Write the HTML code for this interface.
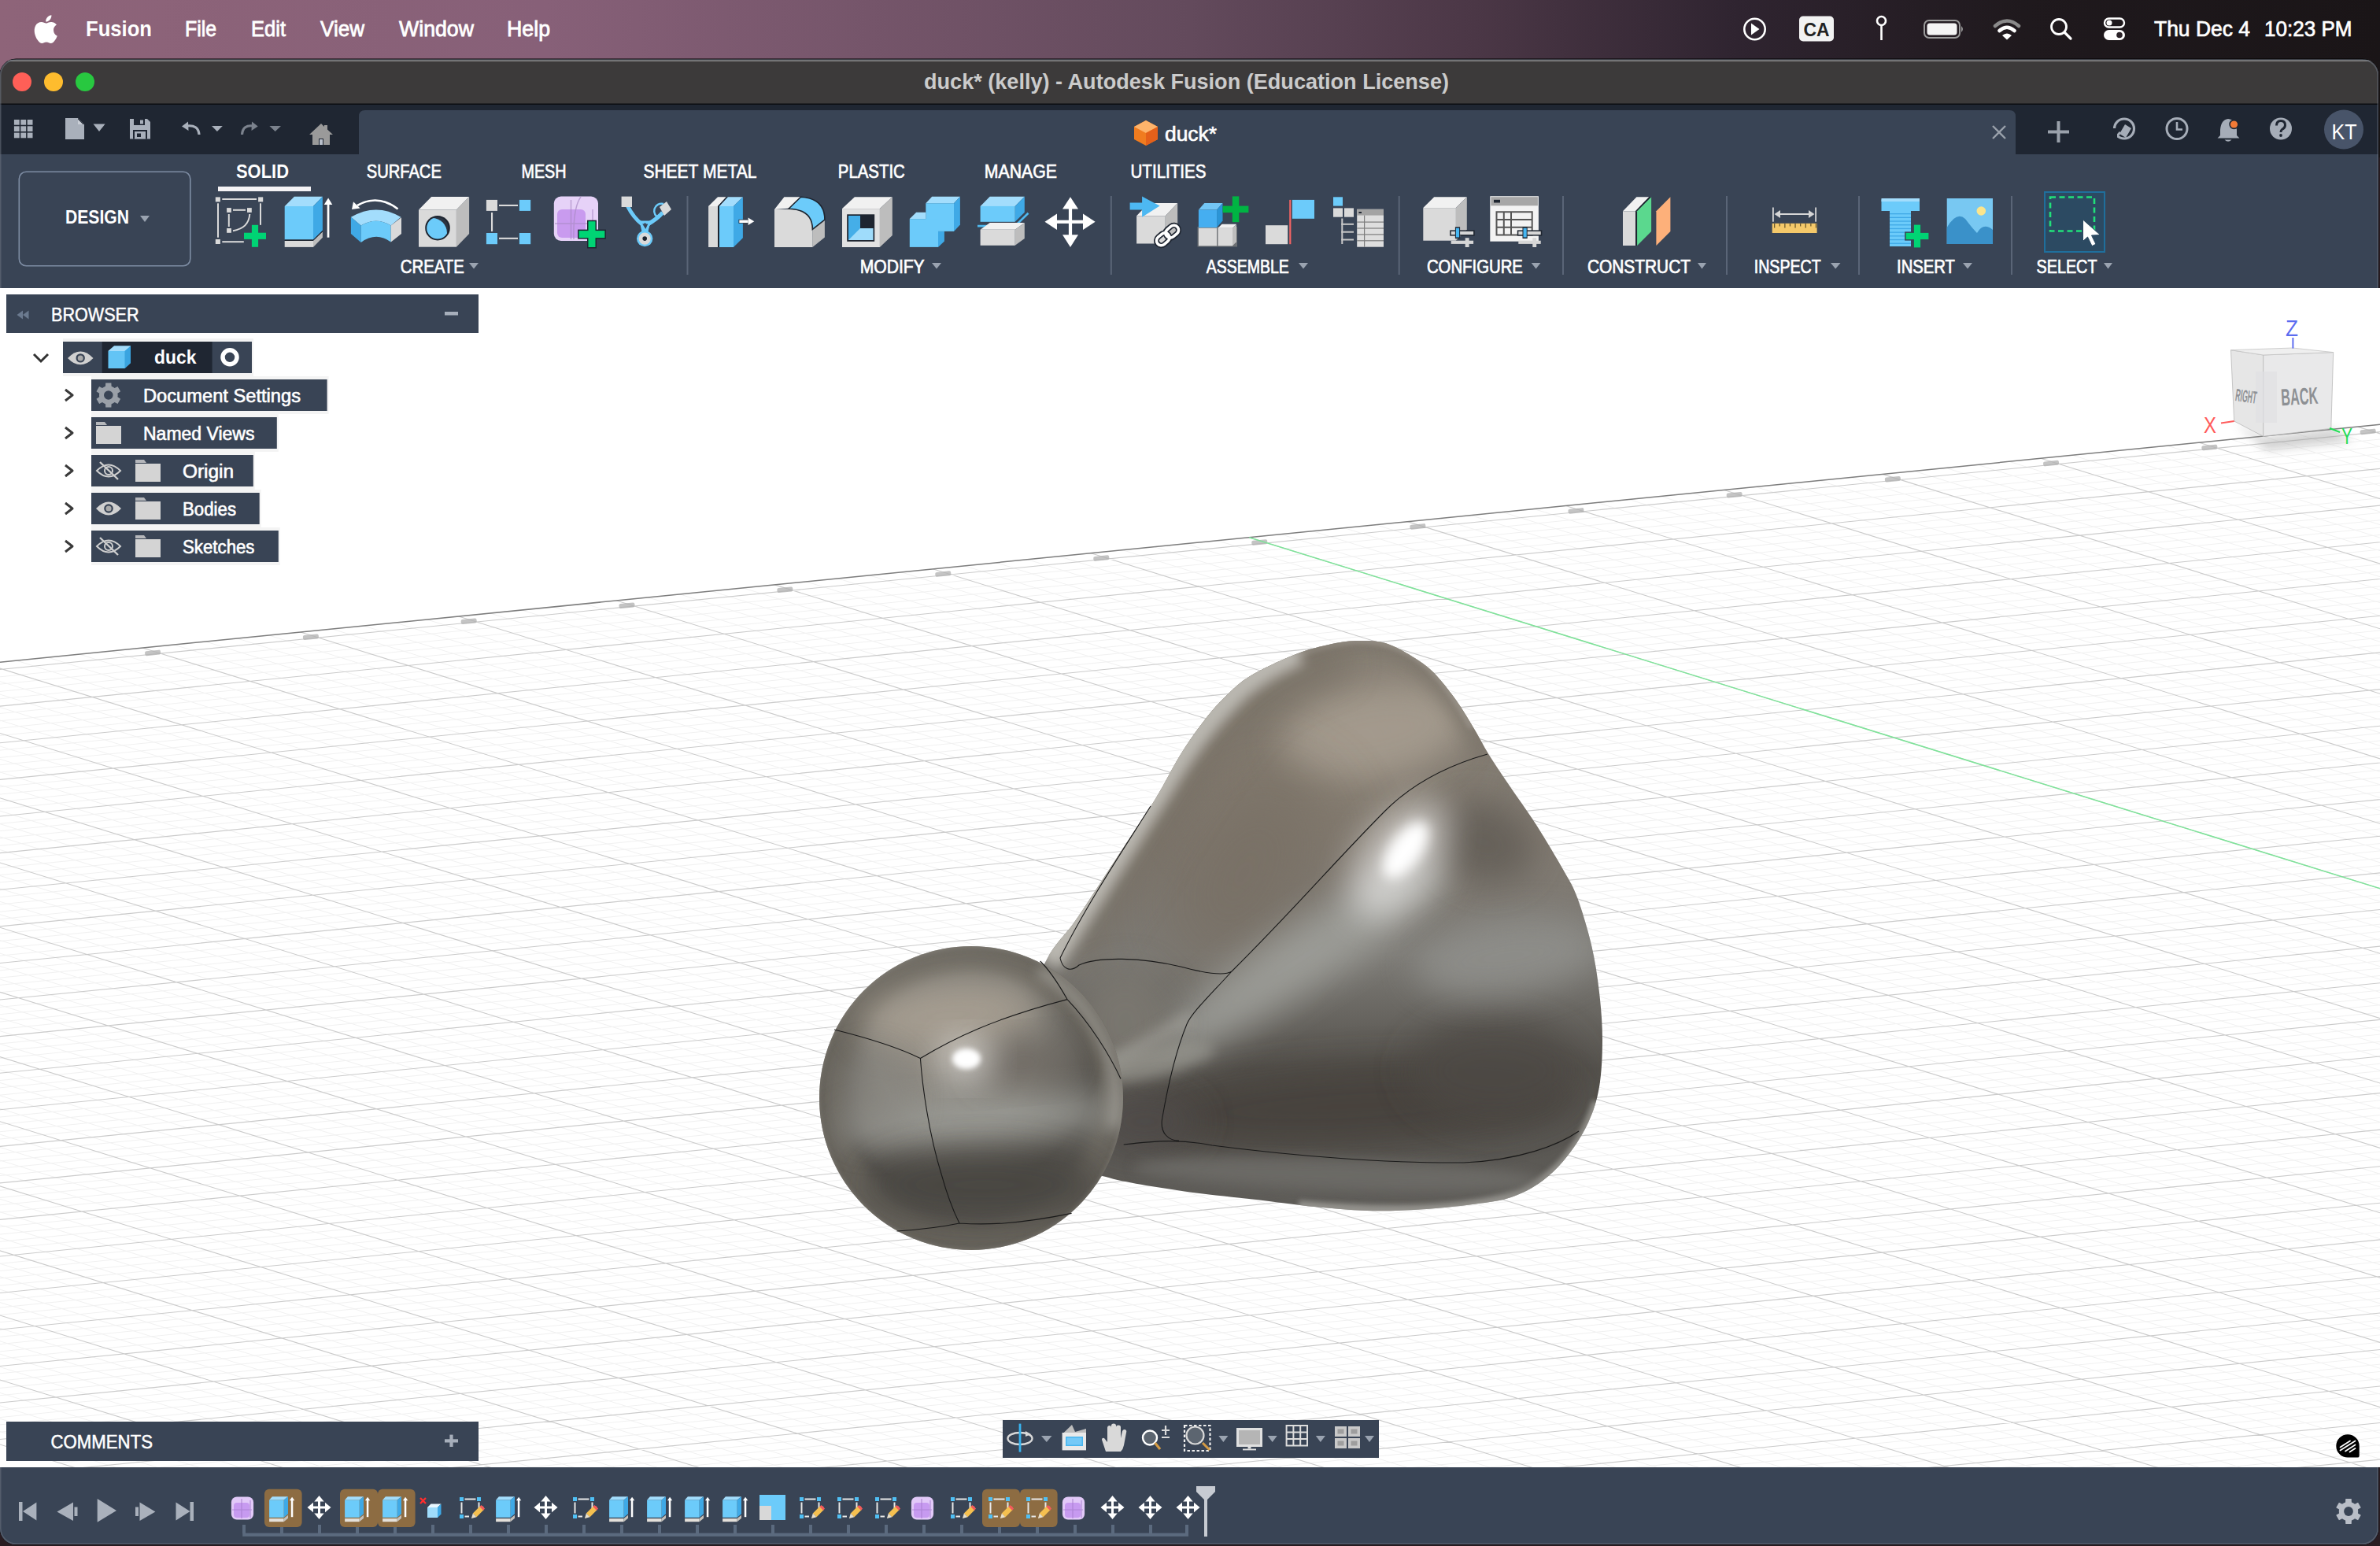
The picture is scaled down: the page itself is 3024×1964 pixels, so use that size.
<!DOCTYPE html><html><head><meta charset="utf-8"><title>duck - Autodesk Fusion</title><style>html,body{margin:0;padding:0;width:3024px;height:1964px;overflow:hidden;background:#2a1d22}svg{display:block}text{font-family:"Liberation Sans",sans-serif}</style></head><body><svg width="3024" height="1964" viewBox="0 0 3024 1964" font-family="Liberation Sans, sans-serif"><defs><clipPath id="vpclip"><rect x="0" y="366" width="3024" height="1498"/></clipPath></defs><rect x="0.0" y="0.0" width="3024.0" height="1964.0" fill="#2a1d22" />
<defs><linearGradient id="mb" x1="0" y1="0" x2="1" y2="0"><stop offset="0" stop-color="#8e6479"/><stop offset="0.23" stop-color="#876078"/><stop offset="0.5" stop-color="#634a5c"/><stop offset="0.62" stop-color="#4b3746"/><stop offset="0.73" stop-color="#2f2430"/><stop offset="0.85" stop-color="#1f191d"/><stop offset="1" stop-color="#1a1517"/></linearGradient><clipPath id="win"><rect x="0" y="75" width="3022" height="1887" rx="20"/></clipPath></defs>
<rect x="0.0" y="0.0" width="3024.0" height="200.0" fill="url(#mb)" />
<rect x="-0.5" y="74.5" width="3023" height="1888" rx="21" fill="#000"/>
<g clip-path="url(#win)">
<rect x="0.0" y="75.0" width="3022.0" height="1887.0" fill="#394455" />
<rect x="0.0" y="75.0" width="3022.0" height="1.0" fill="#000000" />
<rect x="0.0" y="76.0" width="3022.0" height="57.0" fill="#3c3a3a" />
<rect x="0.0" y="76.5" width="3022.0" height="1.5" fill="#8c8c8c" />
<rect x="0.0" y="131.5" width="3022.0" height="1.5" fill="#0b0d10" />
<rect x="0.0" y="133.0" width="3022.0" height="63.0" fill="#1f2632" />
<path d="M456 196V148Q456 140 464 140H2553Q2561 140 2561 148V196Z" fill="#394455"/>
<rect x="0.0" y="196.0" width="3022.0" height="170.0" fill="#394455" />
<rect x="0.0" y="1864.0" width="3022.0" height="98.0" fill="#394455" />
</g>
<rect x="0.75" y="75.75" width="3020.5" height="1885.5" rx="20" fill="none" stroke="#6c7380" stroke-width="1.5" opacity="0.55"/>
<rect x="0.0" y="366.0" width="3024.0" height="1498.0" fill="#ffffff" />
<circle cx="28" cy="104" r="12" fill="#ff5f57"/>
<circle cx="68" cy="104" r="12" fill="#febc2e"/>
<circle cx="108" cy="104" r="12" fill="#28c840"/>
<g transform="translate(41,19) scale(0.0585)" fill="#fff"><path d="M462 330c-1-77 63-114 66-116-36-53-92-60-112-61-48-5-93 28-118 28-24 0-61-27-100-26-52 1-99 30-126 76-54 93-14 232 39 308 26 37 56 79 96 77 39-2 53-25 100-25 47 0 60 25 101 24 42-1 68-38 93-75 30-43 42-84 42-86-1 0-81-31-81-124z"/><path d="M385 103c21-26 36-62 32-98-31 1-69 21-91 47-20 23-37 60-32 95 34 3 69-17 91-44z"/></g>
<text x="109.0" y="46.0" font-size="27" font-weight="bold" fill="#ffffff" text-anchor="start" textLength="84.0" lengthAdjust="spacingAndGlyphs" >Fusion</text>
<text x="235.0" y="46.0" font-size="27" font-weight="normal" fill="#ffffff" text-anchor="start" textLength="40.0" lengthAdjust="spacingAndGlyphs"  stroke="#ffffff" stroke-width="0.8">File</text>
<text x="319.0" y="46.0" font-size="27" font-weight="normal" fill="#ffffff" text-anchor="start" textLength="44.0" lengthAdjust="spacingAndGlyphs"  stroke="#ffffff" stroke-width="0.8">Edit</text>
<text x="407.0" y="46.0" font-size="27" font-weight="normal" fill="#ffffff" text-anchor="start" textLength="56.0" lengthAdjust="spacingAndGlyphs"  stroke="#ffffff" stroke-width="0.8">View</text>
<text x="507.0" y="46.0" font-size="27" font-weight="normal" fill="#ffffff" text-anchor="start" textLength="95.0" lengthAdjust="spacingAndGlyphs"  stroke="#ffffff" stroke-width="0.8">Window</text>
<text x="644.0" y="46.0" font-size="27" font-weight="normal" fill="#ffffff" text-anchor="start" textLength="55.0" lengthAdjust="spacingAndGlyphs"  stroke="#ffffff" stroke-width="0.8">Help</text>
<text x="2737.0" y="46.0" font-size="28" font-weight="normal" fill="#ffffff" text-anchor="start" textLength="122.0" lengthAdjust="spacingAndGlyphs"  stroke="#ffffff" stroke-width="0.7">Thu Dec 4</text>
<text x="2877.0" y="46.0" font-size="28" font-weight="normal" fill="#ffffff" text-anchor="start" textLength="111.5" lengthAdjust="spacingAndGlyphs"  stroke="#ffffff" stroke-width="0.7">10:23 PM</text>
<g fill="none" stroke="#fff" stroke-width="2.6"><circle cx="2229.5" cy="37" r="13.2"/></g>
<path d="M2225 29.5L2235.5 37L2225 44.5Z" fill="#fff"/>
<rect x="2286.0" y="20.5" width="44.0" height="32.0" fill="#f2f2f2" rx="5" />
<text x="2291.5" y="46.0" font-size="23" font-weight="bold" fill="#222" text-anchor="start" textLength="33.0" lengthAdjust="spacingAndGlyphs" >CA</text>
<circle cx="2390.5" cy="26.5" r="5.5" fill="none" stroke="#fff" stroke-width="2.6"/>
<rect x="2389.2" y="31.0" width="2.6" height="20.0" fill="#fff" />
<rect x="2445" y="26" width="45" height="22" rx="6" fill="none" stroke="#9a9a9a" stroke-width="2"/>
<rect x="2448.5" y="29.5" width="38.0" height="15.0" fill="#f4f4f4" rx="3.5" />
<path d="M2492 33Q2496 37 2492 41Z" fill="#9a9a9a"/>
<g fill="none" stroke-linecap="round"><path d="M2535 33Q2550 20 2565 33" stroke="#8a8a8a" stroke-width="4.5"/><path d="M2540.5 39Q2550 30.5 2559.5 39" stroke="#fff" stroke-width="4.5"/></g><path d="M2544 45Q2550 40 2556 45L2550 50.5Z" fill="#fff"/>
<circle cx="2616" cy="34" r="9.5" fill="none" stroke="#fff" stroke-width="2.8"/><path d="M2623 41L2631 49" stroke="#fff" stroke-width="3.2" stroke-linecap="round"/>
<rect x="2674" y="23.5" width="25" height="11" rx="5.5" fill="none" stroke="#fff" stroke-width="2.4"/><circle cx="2680" cy="29" r="3.5" fill="#fff"/><rect x="2673" y="38" width="27" height="13" rx="6.5" fill="#fff"/><circle cx="2693" cy="44.5" r="3.8" fill="#2a2228"/>
<text x="1174.0" y="112.6" font-size="27" font-weight="bold" fill="#cbcbcb" text-anchor="start" textLength="667.0" lengthAdjust="spacingAndGlyphs" >duck* (kelly) - Autodesk Fusion (Education License)</text>
<text x="1480.0" y="178.6" font-size="26" font-weight="normal" fill="#ffffff" text-anchor="start" textLength="66.0" lengthAdjust="spacingAndGlyphs"  stroke="#ffffff" stroke-width="0.6">duck*</text>
<text x="300.0" y="226.0" font-size="24" font-weight="bold" fill="#ffffff" text-anchor="start" textLength="67.0" lengthAdjust="spacingAndGlyphs" >SOLID</text>
<text x="465.8" y="226.0" font-size="24" font-weight="normal" fill="#ffffff" text-anchor="start" textLength="95.0" lengthAdjust="spacingAndGlyphs"  stroke="#ffffff" stroke-width="0.7">SURFACE</text>
<text x="662.5" y="226.0" font-size="24" font-weight="normal" fill="#ffffff" text-anchor="start" textLength="57.0" lengthAdjust="spacingAndGlyphs"  stroke="#ffffff" stroke-width="0.7">MESH</text>
<text x="817.4" y="226.0" font-size="24" font-weight="normal" fill="#ffffff" text-anchor="start" textLength="144.0" lengthAdjust="spacingAndGlyphs"  stroke="#ffffff" stroke-width="0.7">SHEET METAL</text>
<text x="1064.8" y="226.0" font-size="24" font-weight="normal" fill="#ffffff" text-anchor="start" textLength="85.0" lengthAdjust="spacingAndGlyphs"  stroke="#ffffff" stroke-width="0.7">PLASTIC</text>
<text x="1250.8" y="226.0" font-size="24" font-weight="normal" fill="#ffffff" text-anchor="start" textLength="92.0" lengthAdjust="spacingAndGlyphs"  stroke="#ffffff" stroke-width="0.7">MANAGE</text>
<text x="1436.5" y="226.0" font-size="24" font-weight="normal" fill="#ffffff" text-anchor="start" textLength="96.0" lengthAdjust="spacingAndGlyphs"  stroke="#ffffff" stroke-width="0.7">UTILITIES</text>
<rect x="277.0" y="237.0" width="118.0" height="6.0" fill="#f4f2f4" />
<rect x="24.3" y="218.3" width="217.5" height="119.5" rx="9" fill="none" stroke="#7e8da4" stroke-width="1.6"/>
<text x="83.0" y="284.0" font-size="24" font-weight="bold" fill="#ffffff" text-anchor="start" textLength="81.0" lengthAdjust="spacingAndGlyphs" >DESIGN</text>
<path d="M178.0 274.0H190.0L184.0 282.0Z" fill="#9aa3b0"/>
<text x="508.8" y="346.8" font-size="23" font-weight="normal" fill="#ffffff" text-anchor="start" textLength="81.0" lengthAdjust="spacingAndGlyphs"  stroke="#ffffff" stroke-width="0.7">CREATE</text>
<path d="M596.0 334.0H608.0L602.0 341.5Z" fill="#9aa3b0"/>
<text x="1092.7" y="346.8" font-size="23" font-weight="normal" fill="#ffffff" text-anchor="start" textLength="82.0" lengthAdjust="spacingAndGlyphs"  stroke="#ffffff" stroke-width="0.7">MODIFY</text>
<path d="M1184.0 334.0H1196.0L1190.0 341.5Z" fill="#9aa3b0"/>
<text x="1532.8" y="346.8" font-size="23" font-weight="normal" fill="#ffffff" text-anchor="start" textLength="105.0" lengthAdjust="spacingAndGlyphs"  stroke="#ffffff" stroke-width="0.7">ASSEMBLE</text>
<path d="M1650.0 334.0H1662.0L1656.0 341.5Z" fill="#9aa3b0"/>
<text x="1812.9" y="346.8" font-size="23" font-weight="normal" fill="#ffffff" text-anchor="start" textLength="122.0" lengthAdjust="spacingAndGlyphs"  stroke="#ffffff" stroke-width="0.7">CONFIGURE</text>
<path d="M1945.7 334.0H1957.4L1951.6 341.5Z" fill="#9aa3b0"/>
<text x="2017.0" y="346.8" font-size="23" font-weight="normal" fill="#ffffff" text-anchor="start" textLength="131.0" lengthAdjust="spacingAndGlyphs"  stroke="#ffffff" stroke-width="0.7">CONSTRUCT</text>
<path d="M2157.0 334.0H2168.0L2162.5 341.5Z" fill="#9aa3b0"/>
<text x="2228.7" y="346.8" font-size="23" font-weight="normal" fill="#ffffff" text-anchor="start" textLength="85.0" lengthAdjust="spacingAndGlyphs"  stroke="#ffffff" stroke-width="0.7">INSPECT</text>
<path d="M2326.0 334.0H2338.5L2332.2 341.5Z" fill="#9aa3b0"/>
<text x="2410.0" y="346.8" font-size="23" font-weight="normal" fill="#ffffff" text-anchor="start" textLength="74.0" lengthAdjust="spacingAndGlyphs"  stroke="#ffffff" stroke-width="0.7">INSERT</text>
<path d="M2494.0 334.0H2506.0L2500.0 341.5Z" fill="#9aa3b0"/>
<text x="2587.5" y="346.8" font-size="23" font-weight="normal" fill="#ffffff" text-anchor="start" textLength="77.0" lengthAdjust="spacingAndGlyphs"  stroke="#ffffff" stroke-width="0.7">SELECT</text>
<path d="M2673.0 334.0H2684.0L2678.5 341.5Z" fill="#9aa3b0"/>
<rect x="872.5" y="249.0" width="2.0" height="100.0" fill="#5a6577" />
<rect x="1410.8" y="249.0" width="2.0" height="100.0" fill="#5a6577" />
<rect x="1776.7" y="249.0" width="2.0" height="100.0" fill="#5a6577" />
<rect x="1985.0" y="249.0" width="2.0" height="100.0" fill="#5a6577" />
<rect x="2193.0" y="249.0" width="2.0" height="100.0" fill="#5a6577" />
<rect x="2361.0" y="249.0" width="2.0" height="100.0" fill="#5a6577" />
<rect x="2555.0" y="249.0" width="2.0" height="100.0" fill="#5a6577" />
<g transform="translate(268,244)"><rect x="5.8" y="6.4" width="6.1" height="6.0" fill="#dadada" /><rect x="60.1" y="6.4" width="6.1" height="6.0" fill="#dadada" /><rect x="5.8" y="60.0" width="6.1" height="6.0" fill="#dadada" /><rect x="14.3" y="8.0" width="43.7" height="2.0" fill="#dadada" /><rect x="8.0" y="14.3" width="2.0" height="43.4" fill="#dadada" /><rect x="62.0" y="14.3" width="2.0" height="27.5" fill="#dadada" /><rect x="14.3" y="62.2" width="27.5" height="2.0" fill="#dadada" /><rect x="20.1" y="20.1" width="5.8" height="5.8" fill="#dadada" /><rect x="46.0" y="20.1" width="5.8" height="5.8" fill="#dadada" /><rect x="20.1" y="46.0" width="5.8" height="5.8" fill="#dadada" /><rect x="28.0" y="21.8" width="16.0" height="2.0" fill="#dadada" /><rect x="21.8" y="28.0" width="2.0" height="16.0" fill="#dadada" /><path d="M49.3 28Q48 46 28 49.2" fill="none" stroke="#dadada" stroke-width="2"/><rect x="51.9" y="41.8" width="8.2" height="28.0" fill="#00d474" /><rect x="42.0" y="51.7" width="28.0" height="8.2" fill="#00d474" /></g>
<g transform="translate(268,244)"><path d="M93.7 18.0L105.9 5.8L141.9 5.8L130.0 18.0Z" fill="#a3ddfc" /><path d="M130.0 18.0L141.9 5.8L141.9 48.7L130.0 60.4Z" fill="#3fa9e6" /><rect x="93.7" y="18.0" width="36.3" height="42.4" fill="#6ccbfa" /><path d="M93.7 60.4L130.0 60.4L141.9 48.7L141.9 50.6L130.0 62.0L93.7 62.0Z" fill="#1e2530" /><rect x="93.7" y="62.0" width="36.3" height="7.9" fill="#dadada" /><path d="M130.0 62.0L141.9 50.6L141.9 57.7L130.0 69.9Z" fill="#bdbdbd" /><rect x="147.7" y="14.0" width="2.7" height="43.7" fill="#fff" /><path d="M143.8 16.0L149.1 7.4L154.3 16.0Z" fill="#fff" /></g>
<g transform="translate(268,244)"><path d="M237.5 21.5Q212 2 186 17" fill="none" stroke="#fff" stroke-width="2.6"/><path d="M179.0 22.0L181.0 12.2L189.5 20.5Z" fill="#fff" /><path d="M177.9 31.8Q210 13 241.4 31.8L228.7 42.4Q210 31 190.6 42.4Z" fill="#a3ddfc"/><path d="M177.9 31.8L190.6 42.4V64L177.9 53Z" fill="#3fa9e6"/><path d="M190.6 42.4Q210 31 228.7 42.4V63.5Q210 50 190.6 64Z" fill="#6ccbfa"/><path d="M228.7 42.4L242.0 32.3L242.0 53.0L228.7 63.5Z" fill="#dadada" /></g>
<g transform="translate(525,244)"><path d="M7.0 22.5L23.2 5.9L71.1 5.9L54.9 22.5Z" fill="#f1f1f1" /><path d="M54.9 22.5L71.1 5.9L71.1 53.1L54.9 69.7Z" fill="#bdbdbd" /><rect x="7.0" y="22.5" width="47.9" height="47.2" fill="#dadada" /><circle cx="31" cy="45.7" r="15.8" fill="#1e2530"/><clipPath id="holeclip"><circle cx="31" cy="45.7" r="13.8"/></clipPath><g clip-path="url(#holeclip)"><rect x="15" y="30" width="32" height="32" fill="#2b3442"/><circle cx="24" cy="52" r="19" fill="#6ccbfa"/></g></g>
<g transform="translate(525,244)"><rect x="92.9" y="9.9" width="14.1" height="14.0" fill="#dadada" /><rect x="134.9" y="9.9" width="14.3" height="14.0" fill="#6ccbfa" /><rect x="92.9" y="52.0" width="14.1" height="14.2" fill="#6ccbfa" /><rect x="134.9" y="52.0" width="14.3" height="14.2" fill="#6ccbfa" /><rect x="109.0" y="15.9" width="24.0" height="2.1" fill="#dadada" /><rect x="109.0" y="57.8" width="24.0" height="2.1" fill="#dadada" /><rect x="99.0" y="26.0" width="2.1" height="24.0" fill="#dadada" /></g>
<g transform="translate(525,244)"><rect x="178.8" y="5.6" width="56.2" height="56.4" rx="9" fill="#e6d2f8"/><rect x="183" y="22" width="36" height="36" rx="6" fill="#c99bef"/><path d="M200.5 10V60M180 40H233M213 6Q203 20 204 60M228 22V58" stroke="#a98bc4" stroke-width="1.5" fill="none" opacity="0.7"/><rect x="221.0" y="35.7" width="12.0" height="35.8" fill="#1e2530" /><rect x="209.1" y="47.6" width="35.8" height="12.0" fill="#1e2530" /><rect x="222.5" y="37.2" width="9.0" height="32.8" fill="#00d474" /><rect x="210.6" y="49.1" width="32.8" height="9.0" fill="#00d474" /></g>
<g transform="translate(525,244)"><path d="M272 17Q280 33 291 41L293 50H296L298 41Q310 34 317 26" fill="none" stroke="#6ccbfa" stroke-width="5"/><path d="M290.5 40.5H299L294.7 51Z" fill="#394455"/><path d="M288 38H301L295.5 50Z" fill="none" stroke="#6ccbfa" stroke-width="3"/><path d="M318 15A9 9 0 0 0 313 33" fill="none" stroke="#6ccbfa" stroke-width="2.5"/><rect x="264.6" y="5.6" width="13.4" height="13.4" fill="#dadada" /><path d="M313.0 19.0L322.0 12.0L328.0 22.0L319.0 30.0Z" fill="#dadada" /><circle cx="294.2" cy="59.1" r="10.2" fill="#6ccbfa"/><circle cx="294.2" cy="59.1" r="7.6" fill="#dadada"/><circle cx="294.2" cy="59.1" r="2.8" fill="#1e2530"/></g>
<g transform="translate(895,244)"><path d="M5.1 18.0L17.0 6.2L27.8 6.2L17.0 18.0Z" fill="#f1f1f1" /><rect x="5.1" y="18.0" width="11.9" height="52.0" fill="#dadada" /><path d="M17.0 18.0L27.8 6.2L29.9 6.2L19.0 18.0L19.0 70.0L17.0 70.0Z" fill="#1e2530" /><path d="M19.0 18.0L29.9 6.2L48.9 6.2L37.0 18.0Z" fill="#a3ddfc" /><path d="M37.0 18.0L48.9 6.2L48.9 58.2L37.0 70.0Z" fill="#3fa9e6" /><rect x="19.0" y="18.0" width="18.0" height="52.0" fill="#6ccbfa" /><rect x="43.5" y="34.8" width="12.5" height="5.0" fill="#1e2530" /><rect x="44.3" y="35.5" width="11.3" height="3.6" fill="#fff" /><path d="M55.6 32.4L63.3 37.3L55.6 42.0Z" fill="#fff" /><path d="M89.0 22.1L101.4 6.2L122.5 6.2L109.1 20.6Z" fill="#f1f1f1" /><path d="M137.4 47.4L152.9 35.0L152.9 57.6L137.4 70.0Z" fill="#bdbdbd" /><path d="M89 22.1H109.1Q137.4 22 137.4 47.4V70H89Z" fill="#dadada"/><path d="M107 21.3L122.5 6.2Q152.9 8 152.9 35L137.4 47.4Q137.4 22 107 21.3Z" fill="#6ccbfa" stroke="#1e2530" stroke-width="1.6"/><path d="M175.0 21.1L190.9 6.2L238.8 6.2L222.9 21.1Z" fill="#f1f1f1" /><path d="M222.9 21.1L238.8 6.2L238.8 55.1L222.9 70.0Z" fill="#bdbdbd" /><rect x="175.0" y="21.1" width="47.9" height="48.9" fill="#e2e2e2" /><rect x="181.2" y="28.3" width="35.0" height="34.5" fill="#1e2530" /><path d="M183.0 30.0L198.0 30.0L198.0 46.0L214.5 46.0L214.5 61.0L183.0 61.0Z" fill="#9fdcfb" /><path d="M183.0 30.0L198.0 30.0L198.0 46.0L183.0 61.0Z" fill="#45aee8" /></g>
<g transform="translate(1150,244)"><path d="M26.3 14.2L34.2 5.8L69.9 5.8L62.0 14.2Z" fill="#a3ddfc" /><path d="M62.0 14.2L69.9 5.8L69.9 41.5L62.0 49.9Z" fill="#3fa9e6" /><rect x="26.3" y="14.2" width="35.7" height="35.7" fill="#6ccbfa" /><path d="M5.8 34.1L14.2 25.7L26.3 25.7L26.3 34.1Z" fill="#a3ddfc" /><rect x="5.8" y="34.1" width="36.2" height="35.8" fill="#6ccbfa" /><path d="M42.0 49.9L49.9 49.9L49.9 62.5L42.0 69.9Z" fill="#3fa9e6" /><path d="M95.6 17.9L107.7 5.8L151.8 5.8L139.7 17.9Z" fill="#a3ddfc" /><path d="M139.7 17.9L151.8 5.8L151.8 25.7L139.7 37.8Z" fill="#3fa9e6" /><rect x="95.6" y="17.9" width="44.1" height="19.9" fill="#6ccbfa" /><path d="M92 43.1H139.7L156.5 26.8" fill="none" stroke="#4fb9f0" stroke-width="2.6"/><path d="M95.6 47.8L107.7 38.9L151.8 38.9L139.7 47.8Z" fill="#f1f1f1" /><path d="M139.7 47.8L151.8 38.9L151.8 58.9L139.7 67.8Z" fill="#bdbdbd" /><rect x="95.6" y="47.8" width="44.1" height="20.0" fill="#dadada" /><rect x="207.9" y="14.0" width="4.2" height="48.0" fill="#fff" /><rect x="186.0" y="35.7" width="48.0" height="4.2" fill="#fff" /><path d="M210.0 6.3L220.0 21.5L200.0 21.5Z" fill="#fff" /><path d="M210.0 69.9L220.0 54.3L200.0 54.3Z" fill="#fff" /><path d="M177.5 37.8L193.0 27.5L193.0 48.0Z" fill="#fff" /><path d="M241.6 37.8L226.0 27.5L226.0 48.0Z" fill="#fff" /></g>
<g transform="translate(1430,244)"><path d="M14.1 30.3L29.6 14.1L66.2 14.1L50.7 30.3Z" fill="#f1f1f1" /><path d="M50.7 30.3L66.2 14.1L66.2 49.3L50.7 65.5Z" fill="#bdbdbd" /><rect x="14.1" y="30.3" width="36.6" height="35.2" fill="#dadada" /><path d="M5.6 13.4L21.1 13.4L21.1 5.6L43.6 17.6L21.1 31.7L21.1 22.5L5.6 22.5Z" fill="#4db8f2" /><g transform="rotate(-40 53.5 55)" fill="none"><rect x="37" y="49" width="18" height="12" rx="6" stroke="#1e2530" stroke-width="7"/><rect x="52" y="49" width="18" height="12" rx="6" stroke="#1e2530" stroke-width="7"/><rect x="37" y="49" width="18" height="12" rx="6" stroke="#fff" stroke-width="3.6"/><rect x="52" y="49" width="18" height="12" rx="6" stroke="#fff" stroke-width="3.6"/></g><rect x="91.5" y="44.0" width="50.5" height="25.5" fill="#6b6f73" /><rect x="92.9" y="45.7" width="23.2" height="22.6" fill="#dadada" /><path d="M117.5 45.7L122.5 40.7L141.0 40.7L136.0 45.7Z" fill="#f1f1f1" /><path d="M136.0 45.7L141.0 40.7L141.0 63.3L136.0 68.3Z" fill="#bdbdbd" /><rect x="117.5" y="45.7" width="18.5" height="22.6" fill="#dadada" /><path d="M92.9 22.5L100.3 14.1L123.5 14.1L116.1 22.5Z" fill="#73c6f5" /><path d="M116.1 22.5L123.5 14.1L123.5 36.6L116.1 45.0Z" fill="#2b95d6" /><rect x="92.9" y="22.5" width="23.2" height="22.5" fill="#45aef0" /><rect x="135.8" y="5.4" width="8.5" height="32.8" fill="#00b443" /><rect x="123.6" y="17.6" width="32.8" height="8.5" fill="#00b443" /><rect x="178.0" y="42.2" width="28.2" height="24.0" fill="#dadada" /><rect x="208.2" y="9.9" width="2.2" height="56.3" fill="#f26464" /><rect x="211.9" y="9.9" width="28.1" height="23.9" fill="#6ccbfa" /><rect x="264.0" y="6.3" width="12.0" height="11.3" fill="#6ccbfa" /><rect x="264.0" y="20.4" width="12.0" height="11.3" fill="#dadada" /><rect x="278.0" y="20.4" width="12.0" height="11.3" fill="#dadada" /><rect x="274.3" y="33.5" width="2.0" height="32.5" fill="#c8c8c8" /><rect x="274.3" y="39.8" width="15.7" height="2.0" fill="#c8c8c8" /><rect x="274.3" y="49.7" width="15.7" height="2.0" fill="#c8c8c8" /><rect x="274.3" y="59.5" width="15.7" height="2.0" fill="#c8c8c8" /><rect x="294.2" y="21.8" width="33.8" height="47.9" fill="#dedede" /><rect x="294.2" y="21.8" width="33.8" height="7.8" fill="#a3a3a3" /><rect x="296.5" y="25.0" width="3.5" height="2.0" fill="#1e2530" /><rect x="294.2" y="37.5" width="33.8" height="1.2" fill="#7c7c7c" /><rect x="294.2" y="45.4" width="33.8" height="1.2" fill="#7c7c7c" /><rect x="294.2" y="53.3" width="33.8" height="1.2" fill="#7c7c7c" /><rect x="294.2" y="61.2" width="33.8" height="1.2" fill="#7c7c7c" /><rect x="303.0" y="29.6" width="1.2" height="40.1" fill="#7c7c7c" /></g>
<g transform="translate(1800,244)"><path d="M8.3 20.1L22.2 6.2L63.8 6.2L49.9 20.1Z" fill="#f1f1f1" /><path d="M49.9 20.1L63.8 6.2L63.8 47.8L49.9 61.7Z" fill="#bdbdbd" /><rect x="8.3" y="20.1" width="41.6" height="41.6" fill="#dadada" /><rect x="93.3" y="5.2" width="61.6" height="57.5" fill="#f3f3f3" /><rect x="94.3" y="6.2" width="59.6" height="11.1" fill="#a7a7a7" /><rect x="98.0" y="9.8" width="8.0" height="3.7" fill="#1e2530" /><path d="M101.5 25.3H146.7V54.5H101.5ZM101.5 34.9H146.7M101.5 44.8H146.7M110.8 25.3V54.5M120 25.3V54.5" fill="none" stroke="#555" stroke-width="2"/><rect x="42.2" y="48.4" width="31.5" height="7.2" fill="#1e2530" /><rect x="43.7" y="49.9" width="28.4" height="4.2" fill="#d6d6d6" /><rect x="43.7" y="61.7" width="28.4" height="4.2" fill="#d6d6d6" /><rect x="48.9" y="44.3" width="6.2" height="14.7" fill="#1e2530" /><rect x="49.9" y="45.8" width="4.2" height="11.7" fill="#45b6f2" /><rect x="61.7" y="58.2" width="4.9" height="11.8" fill="#d6d6d6" /><rect x="127.8" y="48.4" width="31.5" height="7.2" fill="#1e2530" /><rect x="129.3" y="49.9" width="28.4" height="4.2" fill="#d6d6d6" /><rect x="129.3" y="61.7" width="28.4" height="4.2" fill="#d6d6d6" /><rect x="134.5" y="44.3" width="6.2" height="14.7" fill="#1e2530" /><rect x="135.5" y="45.8" width="4.2" height="11.7" fill="#45b6f2" /><rect x="147.3" y="58.2" width="4.9" height="11.8" fill="#d6d6d6" /></g>
<g transform="translate(1800,244)"><path d="M262.0 24.3L279.4 6.2L295.3 6.2L278.0 24.3Z" fill="#f1f1f1" /><rect x="262.0" y="24.3" width="16.0" height="43.7" fill="#dadada" /><path d="M278.0 24.3L295.3 6.2L298.1 6.2L280.1 24.3L280.1 68.0L278.0 68.0Z" fill="#1e2530" /><path d="M280.1 24.3L298.1 6.2L298.1 50.0L280.1 68.0Z" fill="#5bd88e" /><path d="M304.4 24.3L322.4 6.2L322.4 50.0L304.4 68.0Z" fill="#fdb07a" /></g>
<rect x="2251.7" y="283.8" width="56.9" height="12.2" fill="#f5c96a" /><rect x="2254.0" y="283.8" width="1.3" height="5.7" fill="#6e5a2c" /><rect x="2260.6" y="283.8" width="1.3" height="3.7" fill="#6e5a2c" /><rect x="2267.2" y="283.8" width="1.3" height="5.7" fill="#6e5a2c" /><rect x="2273.8" y="283.8" width="1.3" height="3.7" fill="#6e5a2c" /><rect x="2280.4" y="283.8" width="1.3" height="5.7" fill="#6e5a2c" /><rect x="2287.0" y="283.8" width="1.3" height="3.7" fill="#6e5a2c" /><rect x="2293.6" y="283.8" width="1.3" height="5.7" fill="#6e5a2c" /><rect x="2300.2" y="283.8" width="1.3" height="3.7" fill="#6e5a2c" /><rect x="2306.8" y="283.8" width="1.3" height="5.7" fill="#6e5a2c" /><rect x="2252.0" y="263.5" width="1.8" height="18.2" fill="#d6d6d6" /><rect x="2306.2" y="263.5" width="1.8" height="18.2" fill="#d6d6d6" /><rect x="2258.0" y="271.0" width="44.0" height="2.0" fill="#d6d6d6" /><path d="M2254.5 272.0L2262.0 267.0L2262.0 277.0Z" fill="#d6d6d6" /><path d="M2305.5 272.0L2298.0 267.0L2298.0 277.0Z" fill="#d6d6d6" /><path d="M2390.5 254Q2390.5 252 2393 252H2436Q2439 252 2439 255V268H2390.5Z" fill="#6ccbfa"/><rect x="2390.5" y="252.0" width="48.5" height="4.0" fill="#a3ddfc" /><rect x="2401.0" y="268.0" width="27.0" height="45.0" fill="#6ccbfa" /><rect x="2401.0" y="271.0" width="27.0" height="1.3" fill="#3fa9e6" /><rect x="2401.0" y="275.7" width="27.0" height="1.3" fill="#3fa9e6" /><rect x="2401.0" y="280.4" width="27.0" height="1.3" fill="#3fa9e6" /><rect x="2401.0" y="285.1" width="27.0" height="1.3" fill="#3fa9e6" /><rect x="2401.0" y="289.8" width="27.0" height="1.3" fill="#3fa9e6" /><rect x="2401.0" y="294.5" width="27.0" height="1.3" fill="#3fa9e6" /><rect x="2401.0" y="299.2" width="27.0" height="1.3" fill="#3fa9e6" /><rect x="2401.0" y="303.9" width="27.0" height="1.3" fill="#3fa9e6" /><rect x="2401.0" y="308.6" width="27.0" height="1.3" fill="#3fa9e6" /><rect x="2430.4" y="284.1" width="11.2" height="31.8" fill="#394455" /><rect x="2420.1" y="294.4" width="31.8" height="11.2" fill="#394455" /><rect x="2431.9" y="285.6" width="8.2" height="28.8" fill="#00d474" /><rect x="2421.6" y="295.9" width="28.8" height="8.2" fill="#00d474" /><rect x="2473.7" y="252.0" width="58.3" height="58.0" fill="#78c8f2" /><path d="M2473.7 289Q2486 268 2497 278Q2506 290 2512 296Q2520 282 2532 292V310H2473.7Z" fill="#3a91c9"/><circle cx="2517.3" cy="268" r="5.8" fill="#fbe58c"/><rect x="2598" y="244" width="76" height="76" fill="#2c4a62" stroke="#1f6f9c" stroke-width="2"/><rect x="2605" y="250.5" width="56" height="43" fill="none" stroke="#21e07a" stroke-width="2.6" stroke-dasharray="7 4.5"/><path d="M2646.5 279L2646.5 306.5L2652.5 301L2658 312.6L2663 310.2L2657.5 299L2668.5 298.5Z" fill="#fff" stroke="#2c4a62" stroke-width="1"/>
<rect x="17.9" y="152.0" width="6.8" height="6.7" fill="#a9b0bb" />
<rect x="17.9" y="160.3" width="6.8" height="6.7" fill="#a9b0bb" />
<rect x="17.9" y="168.6" width="6.8" height="6.7" fill="#a9b0bb" />
<rect x="26.3" y="152.0" width="6.8" height="6.7" fill="#a9b0bb" />
<rect x="26.3" y="160.3" width="6.8" height="6.7" fill="#a9b0bb" />
<rect x="26.3" y="168.6" width="6.8" height="6.7" fill="#a9b0bb" />
<rect x="34.7" y="152.0" width="6.8" height="6.7" fill="#a9b0bb" />
<rect x="34.7" y="160.3" width="6.8" height="6.7" fill="#a9b0bb" />
<rect x="34.7" y="168.6" width="6.8" height="6.7" fill="#a9b0bb" />
<path d="M83 150H99L107 158V177H83Z" fill="#a9b0bb"/><path d="M99 150V158H107Z" fill="#1f2632"/>
<path d="M99 151.5L105.5 158H99Z" fill="#c9ced6"/>
<path d="M118.5 157.6H133.6L126.0 167.0Z" fill="#a9b0bb"/>
<path d="M165 151H187L191 155V176.5H165Z" fill="#a9b0bb"/>
<rect x="170.0" y="151.0" width="14.0" height="8.0" fill="#1f2632" />
<rect x="178.0" y="152.5" width="4.0" height="5.0" fill="#a9b0bb" />
<rect x="169.0" y="165.0" width="18.0" height="11.5" fill="#1f2632" />
<rect x="171.0" y="167.0" width="14.0" height="9.5" fill="#a9b0bb" />
<rect x="174.0" y="169.5" width="5.0" height="4.5" fill="#1f2632" />
<path d="M253 171Q252 158 237 160" fill="none" stroke="#a9b0bb" stroke-width="3.2"/>
<path d="M231 160.5L239 154.6L239.5 166Z" fill="#a9b0bb"/>
<path d="M269.0 160.0H282.8L275.9 167.0Z" fill="#a9b0bb"/>
<path d="M307.5 171Q308.5 158 322 160" fill="none" stroke="#7b828d" stroke-width="3.2"/>
<path d="M327.7 160.5L320 154.6L319.5 166Z" fill="#7b828d"/>
<path d="M342.4 160.0H357.0L349.7 167.0Z" fill="#7b828d"/>
<path d="M408 157L393 171H397V184H405V176H411V184H419V171H423L416 164.5V159H412V161Z" fill="#9a9a9a"/>
<rect x="406.0" y="177.0" width="4.0" height="7.0" fill="#b9c0cc" />
<path d="M1441 161L1456 153L1471 161V177L1456 185L1441 177Z" fill="#f07c1f"/><path d="M1441 161L1456 153L1471 161L1456 169Z" fill="#fdb36b"/><path d="M1456 169L1471 161V177L1456 185Z" fill="#e4601a"/>
<path d="M2532 160L2548 176M2548 160L2532 176" stroke="#9aa1ab" stroke-width="2.4"/>
<rect x="2602.0" y="165.5" width="27.0" height="4.0" fill="#9aa1ab" />
<rect x="2613.5" y="154.0" width="4.0" height="27.0" fill="#9aa1ab" />
<circle cx="2699" cy="163.5" r="12.5" fill="none" stroke="#a6adb8" stroke-width="3.2"/>
<path d="M2693 170L2700 158L2708 163L2701 175Z" fill="#a6adb8"/><path d="M2688 175L2694 168" stroke="#a6adb8" stroke-width="3"/>
<rect x="2680.0" y="163.0" width="10.0" height="17.0" fill="#1f2632" />
<circle cx="2766" cy="163.5" r="13" fill="none" stroke="#a6adb8" stroke-width="3"/>
<path d="M2766 155V164.5H2773" fill="none" stroke="#a6adb8" stroke-width="2.6"/>
<path d="M2831 151Q2822 152 2821 165V172L2817.5 175.5H2845.5L2842 172V165Q2841 152 2831 151Z" fill="#a6adb8"/>
<path d="M2826.5 177.5Q2831 182 2835.5 177.5Z" fill="#a6adb8"/>
<circle cx="2838.5" cy="158" r="6.2" fill="#1f2632"/><circle cx="2838.5" cy="158" r="4.6" fill="#f27a36"/>
<circle cx="2898" cy="163.5" r="14" fill="#a6adb8"/>
<path d="M2892.5 159.5Q2892.5 153.5 2898 153.5Q2903.5 153.5 2903.5 159Q2903.5 162.5 2899.5 164.5Q2898 165.5 2898 168" fill="none" stroke="#1f2632" stroke-width="3"/>
<circle cx="2898" cy="172" r="1.9" fill="#1f2632"/>
<circle cx="2978" cy="164.5" r="25" fill="#485469"/>
<text x="2962.5" y="176.5" font-size="28" font-weight="normal" fill="#fff" text-anchor="start" textLength="32.0" lengthAdjust="spacingAndGlyphs" >KT</text>
<g clip-path="url(#vpclip)">
<defs><clipPath id="gclip"><path d="M0 841.13 L3024 539.30 V1864 H0Z"/></clipPath></defs>
<g clip-path="url(#gclip)">
<path d="M-2424.58 1083.14L4002.99 441.58M-2379.11 1097.24L4048.56 455.74M-2356.38 1104.29L4071.34 462.82M-2333.64 1111.34L4094.12 469.89M-2310.91 1118.39L4116.91 476.97M-2265.44 1132.49L4162.47 491.13M-2242.71 1139.54L4185.26 498.21M-2219.98 1146.59L4208.04 505.29M-2197.24 1153.64L4230.82 512.36M-2151.78 1167.74L4276.39 526.52M-2129.05 1174.79L4299.17 533.60M-2106.32 1181.83L4321.95 540.68M-2083.58 1188.88L4344.73 547.75M-2038.12 1202.98L4390.29 561.91M-2015.39 1210.03L4413.07 568.99M-1992.66 1217.08L4435.85 576.06M-1969.93 1224.13L4458.63 583.14M-1924.47 1238.23L4504.19 597.30M-1901.74 1245.28L4526.97 604.37M-1879.01 1252.32L4549.75 611.45M-1856.28 1259.37L4572.53 618.53M-1810.82 1273.47L4618.09 632.68M-1788.09 1280.52L4640.87 639.76M-1765.36 1287.57L4663.64 646.83M-1742.64 1294.62L4686.42 653.91M-1697.18 1308.71L4731.98 668.06M-1674.45 1315.76L4754.75 675.14M-1651.73 1322.81L4777.53 682.22M-1629.00 1329.86L4800.31 689.29M-1583.54 1343.95L4845.86 703.45M-1560.82 1351.00L4868.64 710.52M-1538.09 1358.05L4891.41 717.60M-1515.37 1365.09L4914.19 724.67M-1469.91 1379.19L4959.74 738.83M-1447.19 1386.24L4982.51 745.90M-1424.46 1393.28L5005.29 752.98M-1401.74 1400.33L5028.06 760.05M-1356.29 1414.42L5073.61 774.20M-1333.57 1421.47L5096.39 781.28M-1310.84 1428.52L5119.16 788.35M-1288.12 1435.57L5141.93 795.43M-1242.67 1449.66L5187.48 809.58M-1219.95 1456.71L5210.25 816.66M-1197.23 1463.75L5233.02 823.73M-1174.50 1470.80L5255.80 830.81M-1129.06 1484.89L5301.34 844.96M-1106.34 1491.94L5324.11 852.03M-1083.61 1498.98L5346.88 859.10M-1060.89 1506.03L5369.65 866.18M-1015.45 1520.12L5415.20 880.33M-992.73 1527.17L5437.97 887.40M-970.01 1534.21L5460.74 894.48M-947.29 1541.26L5483.51 901.55M-901.85 1555.35L5529.05 915.70M-879.13 1562.40L5551.82 922.77M-856.41 1569.44L5574.58 929.85M-833.69 1576.49L5597.35 936.92M-788.25 1590.58L5642.89 951.07M-765.53 1597.62L5665.66 958.14M-742.81 1604.67L5688.43 965.22M-720.10 1611.71L5711.19 972.29M-674.66 1625.80L5756.73 986.44M-651.94 1632.85L5779.50 993.51M-629.23 1639.89L5802.26 1000.58M-606.51 1646.94L5825.03 1007.66M-561.08 1661.03L5870.56 1021.80M-538.36 1668.07L5893.33 1028.88M-515.64 1675.12L5916.09 1035.95M-492.93 1682.16L5938.86 1043.02M-447.50 1696.25L5984.39 1057.17M-424.78 1703.29L6007.15 1064.24M-402.07 1710.34L6029.92 1071.31M-379.35 1717.38L6052.68 1078.38M-333.92 1731.47L6098.21 1092.53M-311.21 1738.51L6120.98 1099.60M-288.49 1745.56L6143.74 1106.67M-265.78 1752.60L6166.50 1113.75M-220.35 1766.69L6212.03 1127.89M-197.64 1773.73L6234.79 1134.96M-174.93 1780.78L6257.55 1142.03M-152.22 1787.82L6280.31 1149.10M-106.79 1801.91L6325.84 1163.25M-84.08 1808.95L6348.60 1170.32M-61.37 1815.99L6371.36 1177.39M-38.66 1823.03L6394.12 1184.46M6.77 1837.12L6439.64 1198.61M29.48 1844.16L6462.40 1205.68M52.19 1851.21L6485.16 1212.75M74.90 1858.25L6507.92 1219.82M120.32 1872.33L6553.44 1233.96M143.03 1879.38L6576.20 1241.03M165.74 1886.42L6598.96 1248.10M188.45 1893.46L6621.72 1255.17M233.86 1907.55L6667.24 1269.31M256.57 1914.59L6689.99 1276.38M279.28 1921.63L6712.75 1283.46M301.99 1928.67L6735.51 1290.53M347.40 1942.75L6781.02 1304.67M370.11 1949.80L6803.78 1311.74M392.82 1956.84L6826.54 1318.81M415.53 1963.88L6849.29 1325.88M460.94 1977.96L6894.81 1340.02M483.64 1985.00L6917.56 1347.09M506.35 1992.05L6940.32 1354.16M529.06 1999.09L6963.07 1361.23M574.47 2013.17L7008.58 1375.36M597.17 2020.21L7031.34 1382.43M619.88 2027.25L7054.09 1389.50M642.58 2034.29L7076.85 1396.57M687.99 2048.37L7122.35 1410.71M710.70 2055.41L7145.11 1417.78M733.40 2062.46L7167.86 1424.85M756.10 2069.50L7190.61 1431.92M801.51 2083.58L7236.12 1446.06M824.21 2090.62L7258.87 1453.13M846.91 2097.66L7281.62 1460.19M869.62 2104.70L7304.38 1467.26M915.02 2118.78L7349.88 1481.40M937.72 2125.82L7372.63 1488.47M960.43 2132.86L7395.38 1495.54M983.13 2139.90L7418.13 1502.60M-2384.55 1079.14L1045.90 2142.97M-2344.52 1075.15L1085.98 2139.00M-2304.49 1071.15L1126.06 2135.03M-2264.45 1067.15L1166.14 2131.06M-2184.38 1059.16L1246.31 2123.12M-2144.34 1055.17L1286.40 2119.15M-2104.29 1051.17L1326.49 2115.18M-2064.25 1047.17L1366.58 2111.21M-1984.16 1039.18L1446.77 2103.27M-1944.11 1035.18L1486.86 2099.30M-1904.06 1031.18L1526.96 2095.33M-1864.00 1027.18L1567.06 2091.36M-1783.89 1019.19L1647.26 2083.42M-1743.83 1015.19L1687.37 2079.44M-1703.77 1011.19L1727.48 2075.47M-1663.71 1007.19L1767.58 2071.50M-1583.58 999.19L1847.81 2063.56M-1543.52 995.20L1887.92 2059.58M-1503.45 991.20L1928.04 2055.61M-1463.38 987.20L1968.15 2051.64M-1383.23 979.20L2048.39 2043.69M-1343.15 975.20L2088.52 2039.72M-1303.08 971.20L2128.64 2035.75M-1263.00 967.20L2168.77 2031.77M-1182.83 959.19L2249.03 2023.82M-1142.75 955.19L2289.16 2019.85M-1102.66 951.19L2329.29 2015.87M-1062.57 947.19L2369.43 2011.90M-982.39 939.19L2449.70 2003.95M-942.29 935.19L2489.85 1999.98M-902.20 931.18L2529.99 1996.00M-862.10 927.18L2570.13 1992.02M-781.90 919.18L2650.43 1984.07M-741.80 915.17L2690.58 1980.10M-701.69 911.17L2730.73 1976.12M-661.58 907.17L2770.88 1972.14M-581.37 899.16L2851.19 1964.19M-541.25 895.16L2891.35 1960.21M-501.14 891.15L2931.51 1956.24M-461.02 887.15L2971.68 1952.26M-380.79 879.14L3052.01 1944.30M-340.67 875.14L3092.17 1940.33M-300.54 871.13L3132.34 1936.35M-260.42 867.13L3172.51 1932.37M-180.17 859.11L3252.86 1924.41M-140.04 855.11L3293.04 1920.43M-99.90 851.10L3333.22 1916.46M-59.77 847.10L3373.40 1912.48M20.50 839.09L3453.76 1904.52M60.64 835.08L3493.95 1900.54M100.78 831.07L3534.14 1896.56M140.92 827.07L3574.33 1892.58M221.22 819.05L3654.71 1884.62M261.36 815.04L3694.91 1880.64M301.51 811.04L3735.10 1876.66M341.66 807.03L3775.30 1872.68M421.97 799.01L3855.70 1864.71M462.13 795.01L3895.91 1860.73M502.29 791.00L3936.11 1856.75M542.45 786.99L3976.32 1852.77M622.78 778.97L4056.74 1844.81M662.94 774.96L4096.95 1840.82M703.11 770.95L4137.17 1836.84M743.28 766.94L4177.38 1832.86M823.62 758.92L4257.82 1824.89M863.80 754.91L4298.04 1820.91M903.97 750.90L4338.27 1816.93M944.15 746.89L4378.49 1812.94M1024.51 738.87L4458.95 1804.97M1064.70 734.86L4499.18 1800.99M1104.88 730.85L4539.41 1797.01M1145.07 726.84L4579.64 1793.02M1225.45 718.82L4660.12 1785.05M1265.64 714.80L4700.36 1781.07M1305.84 710.79L4740.60 1777.08M1346.04 706.78L4780.84 1773.10M1426.43 698.75L4861.33 1765.13M1466.64 694.74L4901.58 1761.14M1506.84 690.73L4941.83 1757.15M1547.05 686.72L4982.09 1753.17M1627.46 678.69L5062.60 1745.20M1667.67 674.68L5102.85 1741.21M1707.89 670.66L5143.11 1737.22M1748.10 666.65L5183.37 1733.23M1828.53 658.62L5263.90 1725.26M1868.75 654.61L5304.17 1721.27M1908.98 650.59L5344.44 1717.28M1949.20 646.58L5384.71 1713.30M2029.65 638.55L5465.25 1705.32M2069.88 634.53L5505.53 1701.33M2110.11 630.51L5545.81 1697.34M2150.34 626.50L5586.09 1693.35M2230.81 618.47L5666.65 1685.38M2271.05 614.45L5706.93 1681.39M2311.29 610.43L5747.22 1677.40M2351.53 606.42L5787.51 1673.41M2432.02 598.38L5868.09 1665.43M2472.27 594.37L5908.38 1661.44M2512.52 590.35L5948.68 1657.45M2552.77 586.33L5988.98 1653.46M2633.27 578.30L6069.58 1645.47M2673.53 574.28L6109.88 1641.48M2713.79 570.26L6150.19 1637.49M2754.05 566.24L6190.49 1633.50M2834.57 558.20L6271.11 1625.52M2874.84 554.18L6311.42 1621.52M2915.10 550.17L6351.73 1617.53M2955.37 546.15L6392.05 1613.54M3035.91 538.11L6472.69 1605.55M3076.19 534.09L6513.01 1601.56" stroke="#f1f1f1" stroke-width="1" fill="none"/>
<path d="M-2401.85 1090.19L4025.77 448.66M-2288.18 1125.44L4139.69 484.05M-2174.51 1160.69L4253.60 519.44M-2060.85 1195.93L4367.51 554.83M-1947.20 1231.18L4481.41 590.22M-1833.55 1266.42L4595.31 625.60M-1719.91 1301.66L4709.20 660.99M-1606.27 1336.90L4823.08 696.37M-1492.64 1372.14L4936.96 731.75M-1379.01 1407.38L5050.84 767.13M-1265.39 1442.61L5164.71 802.51M-1151.78 1477.84L5278.57 837.88M-1038.17 1513.08L5392.43 873.25M-924.57 1548.31L5506.28 908.63M-810.97 1583.53L5620.12 943.99M-697.38 1618.76L5733.96 979.36M-583.79 1653.98L5847.80 1014.73M-470.21 1689.21L5961.62 1050.09M-356.64 1724.43L6075.45 1085.46M-243.07 1759.64L6189.27 1120.82M-129.50 1794.86L6303.08 1156.18M-15.94 1830.08L6416.88 1191.53M97.61 1865.29L6530.68 1226.89M211.15 1900.50L6644.48 1262.24M324.70 1935.71L6758.27 1297.60M438.23 1970.92L6872.05 1332.95M551.76 2006.13L6985.83 1368.30M665.29 2041.33L7099.60 1403.64M778.81 2076.54L7213.37 1438.99M892.32 2111.74L7327.13 1474.33M-2424.58 1083.14L1005.83 2146.94M-2224.42 1063.16L1206.23 2127.09M-2024.20 1043.17L1406.67 2107.24M-1823.95 1023.19L1607.16 2087.39M-1623.65 1003.19L1807.69 2067.53M-1423.30 983.20L2008.27 2047.67M-1222.91 963.20L2208.90 2027.80M-1022.48 943.19L2409.57 2007.93M-822.00 923.18L2610.28 1988.05M-621.48 903.16L2811.04 1968.17M-420.91 883.14L3011.84 1948.28M-220.29 863.12L3212.69 1928.39M-19.63 843.09L3413.58 1908.50M181.07 823.06L3614.52 1888.60M381.82 803.02L3815.50 1868.70M582.61 782.98L4016.53 1848.79M783.45 762.93L4217.60 1828.88M984.33 742.88L4418.72 1808.96M1185.26 722.83L4619.88 1789.04M1386.23 702.77L4821.09 1769.11M1587.25 682.70L5022.34 1749.18M1788.32 662.63L5223.64 1729.25M1989.42 642.56L5424.98 1709.31M2190.58 622.48L5626.37 1689.36M2391.78 602.40L5827.80 1669.42M2593.02 582.31L6029.28 1649.46M2794.31 562.22L6230.80 1629.51M2995.64 542.13L6432.37 1609.55" stroke="#cbcbcb" stroke-width="1.1" fill="none"/>
</g>
<path d="M0 841.13L3024 539.30" stroke="#7d7d7d" stroke-width="1.5"/>
<g transform="translate(194.1,829.4) rotate(-5.6)"><rect x="-10" y="-3" width="20" height="6" rx="2" fill="#b0b0b0" opacity="0.75"/></g>
<g transform="translate(394.9,809.3) rotate(-5.6)"><rect x="-10" y="-3" width="20" height="6" rx="2" fill="#b0b0b0" opacity="0.75"/></g>
<g transform="translate(595.7,789.3) rotate(-5.6)"><rect x="-10" y="-3" width="20" height="6" rx="2" fill="#b0b0b0" opacity="0.75"/></g>
<g transform="translate(796.5,769.2) rotate(-5.6)"><rect x="-10" y="-3" width="20" height="6" rx="2" fill="#b0b0b0" opacity="0.75"/></g>
<g transform="translate(997.4,749.2) rotate(-5.6)"><rect x="-10" y="-3" width="20" height="6" rx="2" fill="#b0b0b0" opacity="0.75"/></g>
<g transform="translate(1198.3,729.1) rotate(-5.6)"><rect x="-10" y="-3" width="20" height="6" rx="2" fill="#b0b0b0" opacity="0.75"/></g>
<g transform="translate(1399.3,709.1) rotate(-5.6)"><rect x="-10" y="-3" width="20" height="6" rx="2" fill="#b0b0b0" opacity="0.75"/></g>
<g transform="translate(1600.3,689.0) rotate(-5.6)"><rect x="-10" y="-3" width="20" height="6" rx="2" fill="#b0b0b0" opacity="0.75"/></g>
<g transform="translate(1801.4,668.9) rotate(-5.6)"><rect x="-10" y="-3" width="20" height="6" rx="2" fill="#b0b0b0" opacity="0.75"/></g>
<g transform="translate(2002.5,648.9) rotate(-5.6)"><rect x="-10" y="-3" width="20" height="6" rx="2" fill="#b0b0b0" opacity="0.75"/></g>
<g transform="translate(2203.7,628.8) rotate(-5.6)"><rect x="-10" y="-3" width="20" height="6" rx="2" fill="#b0b0b0" opacity="0.75"/></g>
<g transform="translate(2404.9,608.7) rotate(-5.6)"><rect x="-10" y="-3" width="20" height="6" rx="2" fill="#b0b0b0" opacity="0.75"/></g>
<g transform="translate(2606.1,588.6) rotate(-5.6)"><rect x="-10" y="-3" width="20" height="6" rx="2" fill="#b0b0b0" opacity="0.75"/></g>
<g transform="translate(2807.4,568.5) rotate(-5.6)"><rect x="-10" y="-3" width="20" height="6" rx="2" fill="#b0b0b0" opacity="0.75"/></g>
<g transform="translate(3008.7,548.4) rotate(-5.6)"><rect x="-10" y="-3" width="20" height="6" rx="2" fill="#b0b0b0" opacity="0.75"/></g>
<path d="M1587.3 682.7L5022.3 1749.2" stroke="#7fe39a" stroke-width="1.6"/>
<defs><filter id="b1" x="-50%" y="-50%" width="200%" height="200%"><feGaussianBlur stdDeviation="8"/></filter><filter id="b2" x="-50%" y="-50%" width="200%" height="200%"><feGaussianBlur stdDeviation="22"/></filter><filter id="b3" x="-50%" y="-50%" width="200%" height="200%"><feGaussianBlur stdDeviation="45"/></filter><filter id="b0" x="-50%" y="-50%" width="200%" height="200%"><feGaussianBlur stdDeviation="3"/></filter><clipPath id="bodyclip"><path d="M1300.0 1300.0C1295.0 1258.2 1319.3 1240.2 1330.0 1219.0C1340.7 1197.8 1353.3 1188.2 1364.0 1173.0C1374.7 1157.8 1383.7 1143.7 1394.0 1128.0C1404.3 1112.3 1413.7 1097.8 1426.0 1079.0C1438.3 1060.2 1455.7 1035.1 1468.0 1015.0C1480.3 994.9 1489.4 975.4 1500.0 958.4C1510.6 941.4 1522.0 925.6 1531.7 913.2C1541.4 900.8 1548.6 893.0 1558.0 884.0C1567.4 875.0 1573.8 867.6 1588.3 858.9C1602.8 850.2 1627.6 838.5 1644.9 831.7C1662.2 824.9 1678.8 821.1 1692.4 818.1C1706.0 815.1 1715.0 814.2 1726.3 814.0C1737.6 813.8 1749.0 813.7 1760.3 817.0C1771.6 820.3 1784.1 827.8 1794.3 834.0C1804.5 840.2 1812.0 844.9 1821.4 854.3C1830.8 863.7 1842.1 878.4 1850.8 890.5C1859.5 902.6 1866.7 915.5 1873.5 926.8C1880.3 938.1 1884.1 946.3 1891.6 958.4C1899.1 970.5 1908.5 984.1 1918.7 999.2C1928.9 1014.3 1941.4 1031.3 1952.7 1049.0C1964.0 1066.7 1978.0 1090.4 1986.6 1105.6C1995.1 1120.8 1998.1 1124.2 2004.0 1140.0C2009.9 1155.8 2017.3 1180.4 2022.0 1200.5C2026.7 1220.6 2029.7 1240.6 2032.0 1260.6C2034.3 1280.6 2036.0 1300.7 2036.0 1320.7C2036.0 1340.7 2035.0 1363.2 2032.0 1380.8C2029.0 1398.3 2024.7 1411.5 2018.0 1426.0C2011.3 1440.5 2001.7 1455.7 1992.0 1468.0C1982.3 1480.3 1972.0 1491.2 1960.0 1500.0C1948.0 1508.8 1934.8 1516.0 1920.0 1521.0C1905.2 1526.0 1890.3 1527.4 1871.0 1530.0C1851.7 1532.6 1826.3 1535.2 1804.0 1536.5C1781.7 1537.8 1759.4 1538.6 1737.0 1538.0C1714.6 1537.4 1692.1 1535.2 1669.7 1533.0C1647.3 1530.8 1630.5 1528.0 1602.5 1524.7C1574.5 1521.4 1534.6 1518.0 1501.7 1513.0C1468.8 1508.0 1428.6 1502.2 1405.0 1495.0C1381.4 1487.8 1377.5 1502.5 1360.0 1470.0C1342.5 1437.5 1305.0 1341.8 1300.0 1300.0Z"/></clipPath><clipPath id="sphclip"><circle cx="1234" cy="1395" r="193"/></clipPath><linearGradient id="bodyg" x1="0" y1="813" x2="0" y2="1540" gradientUnits="userSpaceOnUse"><stop offset="0" stop-color="#8a8379"/><stop offset="0.35" stop-color="#807970"/><stop offset="0.55" stop-color="#7d7b76"/><stop offset="0.75" stop-color="#55524d"/><stop offset="1" stop-color="#5f5d59"/></linearGradient><radialGradient id="sphg" cx="1215" cy="1330" r="230" gradientUnits="userSpaceOnUse"><stop offset="0" stop-color="#9a958c"/><stop offset="0.45" stop-color="#838079"/><stop offset="0.8" stop-color="#54514c"/><stop offset="1" stop-color="#5e5b56"/></radialGradient></defs>
<path d="M1300.0 1300.0C1295.0 1258.2 1319.3 1240.2 1330.0 1219.0C1340.7 1197.8 1353.3 1188.2 1364.0 1173.0C1374.7 1157.8 1383.7 1143.7 1394.0 1128.0C1404.3 1112.3 1413.7 1097.8 1426.0 1079.0C1438.3 1060.2 1455.7 1035.1 1468.0 1015.0C1480.3 994.9 1489.4 975.4 1500.0 958.4C1510.6 941.4 1522.0 925.6 1531.7 913.2C1541.4 900.8 1548.6 893.0 1558.0 884.0C1567.4 875.0 1573.8 867.6 1588.3 858.9C1602.8 850.2 1627.6 838.5 1644.9 831.7C1662.2 824.9 1678.8 821.1 1692.4 818.1C1706.0 815.1 1715.0 814.2 1726.3 814.0C1737.6 813.8 1749.0 813.7 1760.3 817.0C1771.6 820.3 1784.1 827.8 1794.3 834.0C1804.5 840.2 1812.0 844.9 1821.4 854.3C1830.8 863.7 1842.1 878.4 1850.8 890.5C1859.5 902.6 1866.7 915.5 1873.5 926.8C1880.3 938.1 1884.1 946.3 1891.6 958.4C1899.1 970.5 1908.5 984.1 1918.7 999.2C1928.9 1014.3 1941.4 1031.3 1952.7 1049.0C1964.0 1066.7 1978.0 1090.4 1986.6 1105.6C1995.1 1120.8 1998.1 1124.2 2004.0 1140.0C2009.9 1155.8 2017.3 1180.4 2022.0 1200.5C2026.7 1220.6 2029.7 1240.6 2032.0 1260.6C2034.3 1280.6 2036.0 1300.7 2036.0 1320.7C2036.0 1340.7 2035.0 1363.2 2032.0 1380.8C2029.0 1398.3 2024.7 1411.5 2018.0 1426.0C2011.3 1440.5 2001.7 1455.7 1992.0 1468.0C1982.3 1480.3 1972.0 1491.2 1960.0 1500.0C1948.0 1508.8 1934.8 1516.0 1920.0 1521.0C1905.2 1526.0 1890.3 1527.4 1871.0 1530.0C1851.7 1532.6 1826.3 1535.2 1804.0 1536.5C1781.7 1537.8 1759.4 1538.6 1737.0 1538.0C1714.6 1537.4 1692.1 1535.2 1669.7 1533.0C1647.3 1530.8 1630.5 1528.0 1602.5 1524.7C1574.5 1521.4 1534.6 1518.0 1501.7 1513.0C1468.8 1508.0 1428.6 1502.2 1405.0 1495.0C1381.4 1487.8 1377.5 1502.5 1360.0 1470.0C1342.5 1437.5 1305.0 1341.8 1300.0 1300.0Z" fill="url(#bodyg)"/>
<g clip-path="url(#bodyclip)"><ellipse cx="1690" cy="960" rx="170" ry="110" fill="#847b70" opacity="0.9" filter="url(#b3)" transform="rotate(-25 1690 960)"/><ellipse cx="1745" cy="930" rx="120" ry="60" fill="#a89f92" opacity="0.85" filter="url(#b2)" transform="rotate(-10 1745 930)"/><ellipse cx="1580" cy="1110" rx="90" ry="140" fill="#786f65" opacity="0.85" filter="url(#b3)" transform="rotate(30 1580 1110)"/><path d="M1520 940C1560 880 1640 822 1725 812C1790 812 1840 860 1890 958" fill="none" stroke="#7a7369" stroke-width="34" opacity="0.55" filter="url(#b1)"/><path d="M1540 905C1580 860 1650 822 1725 814C1790 814 1830 850 1870 925" fill="none" stroke="#b0aca4" stroke-width="5" opacity="0.6" filter="url(#b0)"/><path d="M1362 1226L1494 1016C1520 972 1552 934 1594 892C1628 864 1668 846 1710 838" fill="none" stroke="#766e64" stroke-width="40" opacity="0.75" filter="url(#b2)"/><path d="M1332 1222L1474 1000C1500 955 1530 915 1575 872C1600 852 1625 838 1650 828" fill="none" stroke="#bab7b0" stroke-width="34" filter="url(#b1)"/><ellipse cx="1720" cy="1405" rx="280" ry="52" fill="#46433e" opacity="0.95" filter="url(#b2)" transform="rotate(-3 1720 1405)"/><ellipse cx="1900" cy="1360" rx="110" ry="65" fill="#4d4a45" opacity="0.8" filter="url(#b2)"/><ellipse cx="1650" cy="1220" rx="230" ry="40" fill="#a0a19c" opacity="0.85" filter="url(#b2)" transform="rotate(-33 1650 1220)"/><ellipse cx="1915" cy="1215" rx="120" ry="48" fill="#90908c" opacity="0.85" filter="url(#b2)" transform="rotate(-8 1915 1215)"/><ellipse cx="1885" cy="1070" rx="65" ry="50" fill="#605b55" opacity="0.8" filter="url(#b2)" transform="rotate(20 1885 1070)"/><ellipse cx="1778" cy="1092" rx="48" ry="85" fill="#ffffff" opacity="0.55" filter="url(#b2)" transform="rotate(35 1778 1092)"/><ellipse cx="1786" cy="1080" rx="20" ry="42" fill="#ffffff" opacity="1.0" filter="url(#b1)" transform="rotate(35 1786 1080)"/><ellipse cx="1430" cy="1300" rx="60" ry="70" fill="#7c7871" opacity="0.9" filter="url(#b2)"/><ellipse cx="1455" cy="1425" rx="70" ry="38" fill="#4f4c48" opacity="0.9" filter="url(#b2)"/><path d="M1410 1352Q1465 1320 1515 1292" fill="none" stroke="#a3a19b" stroke-width="18" opacity="0.6" filter="url(#b1)"/><ellipse cx="1455" cy="1350" rx="90" ry="20" fill="#97968f" opacity="0.7" filter="url(#b1)" transform="rotate(-12 1455 1350)"/><path d="M2030 1400C2010 1460 1980 1495 1930 1518C1860 1540 1760 1542 1650 1532" fill="none" stroke="#b5b4ae" stroke-width="14" opacity="0.6" filter="url(#b0)"/><ellipse cx="1700" cy="1492" rx="260" ry="20" fill="#706e6a" opacity="0.8" filter="url(#b1)" transform="rotate(2 1700 1492)"/></g>
<path d="M1890 958C1830 975 1790 1000 1760 1030C1700 1090 1640 1160 1565 1234M1565 1234C1540 1262 1515 1285 1508 1301C1492 1340 1482 1390 1476.5 1422C1474 1440 1485 1449 1498 1449M1347 1217C1350 1231 1360 1236 1371 1226C1395 1215 1450 1216 1500 1228C1530 1236 1556 1240 1565 1234M1462 1024C1430 1075 1380 1150 1347 1217M1427.7 1454C1470 1449 1500 1447 1540 1455C1640 1468 1760 1478 1860 1477C1930 1474 1980 1455 2006 1437" fill="none" stroke="#1a1a1a" stroke-width="1.1"/>
<circle cx="1234" cy="1395" r="193" fill="url(#sphg)"/>
<g clip-path="url(#sphclip)"><circle cx="1234" cy="1395" r="178" fill="none" stroke="#6c675f" stroke-width="34" opacity="0.75" filter="url(#b1)"/><ellipse cx="1205" cy="1290" rx="115" ry="38" fill="#a79f92" opacity="0.9" filter="url(#b2)" transform="rotate(-5 1205 1290)"/><ellipse cx="1245" cy="1422" rx="185" ry="30" fill="#9d9e99" opacity="0.85" filter="url(#b2)" transform="rotate(-4 1245 1422)"/><ellipse cx="1110" cy="1395" rx="45" ry="55" fill="#8e8c86" opacity="0.6" filter="url(#b2)"/><ellipse cx="1250" cy="1505" rx="150" ry="45" fill="#4a4743" opacity="0.95" filter="url(#b2)"/><ellipse cx="1300" cy="1350" rx="60" ry="28" fill="#67625b" opacity="0.75" filter="url(#b2)" transform="rotate(-5 1300 1350)"/><ellipse cx="1228" cy="1345" rx="32" ry="25" fill="#ffffff" opacity="0.6" filter="url(#b2)"/><ellipse cx="1228" cy="1345" rx="18" ry="13" fill="#ffffff" opacity="1.0" filter="url(#b0)"/><path d="M1320.4 1232.5A184 184 0 0 1 1414.0 1433.3" fill="none" stroke="#aba9a2" stroke-width="16" opacity="0.65" filter="url(#b1)"/><circle cx="1234" cy="1395" r="197" fill="none" stroke="#9c9890" stroke-width="8" opacity="0.5" filter="url(#b0)"/></g>
<path d="M1060 1308C1100 1318 1140 1330 1169.4 1344.5M1169.4 1344.5C1210 1320 1262 1294 1356 1269.6M1356 1269.6C1345 1250 1333 1232 1321.7 1221M1356 1269.6C1385 1300 1410 1340 1424 1370.6M1169.4 1344.5C1172 1380 1180 1440 1196.5 1493C1204 1520 1212 1540 1219 1554M1139.6 1564C1170 1562 1200 1558 1219 1554C1250 1556 1290 1556 1361.6 1541.4" fill="none" stroke="#1a1a1a" stroke-width="1.1"/>
<defs><filter id="cshadow" x="-50%" y="-50%" width="200%" height="200%"><feGaussianBlur stdDeviation="6"/></filter></defs>
<path d="M2840 537L2876 556L2962 545L2990 560L2880 572Z" fill="#9a9a9a" opacity="0.45" filter="url(#cshadow)"/>
<path d="M2834.5 444.7L2875.7 451V554.3L2838.7 535Z" fill="#e6e6e6" stroke="#b9b9b9" stroke-width="0.8"/>
<path d="M2875.7 451L2964.7 447.6L2961.8 544.3L2875.7 554.3Z" fill="#e9e9ea" stroke="#b9b9b9" stroke-width="0.8"/>
<path d="M2834.5 444.7L2913 442L2964.7 447.6L2875.7 451Z" fill="#efefef" stroke="#c4c4c4" stroke-width="0.8"/>
<rect x="2866.0" y="472.0" width="27.0" height="65.0" fill="#dfe0e3" opacity="0.7"/>
<text x="2841" y="511" font-size="22" font-weight="bold" fill="#8f9296" textLength="27" lengthAdjust="spacingAndGlyphs" transform="rotate(8 2854 500)">RIGHT</text>
<text x="2898" y="514" font-size="30" font-weight="bold" fill="#8d9094" textLength="47" lengthAdjust="spacingAndGlyphs" transform="rotate(-3 2920 500)">BACK</text>
<path d="M2913.4 429V442.6" stroke="#5f6ef0" stroke-width="2"/>
<text x="2904" y="427" font-size="30" fill="#5b6cf0" textLength="16" lengthAdjust="spacingAndGlyphs">Z</text>
<path d="M2822 537.5L2838.7 535" stroke="#ff5c5c" stroke-width="2"/>
<text x="2800" y="550" font-size="29" fill="#ff5a5a" textLength="16" lengthAdjust="spacingAndGlyphs">X</text>
<path d="M2960 544L2973 549" stroke="#22dd55" stroke-width="2"/>
<text x="2975" y="563.5" font-size="29" fill="#22dd55" textLength="14" lengthAdjust="spacingAndGlyphs">Y</text>
<path d="M2983 1822.2A14.7 14.7 0 0 0 2968.3 1836.9A14.7 14.7 0 0 0 2983 1851.6H2995.5Q2997.7 1851.6 2997.7 1849.4V1836.9A14.7 14.7 0 0 0 2983 1822.2Z" fill="#000"/>
<path d="M2973.5 1838.5L2986 1830.5M2973.5 1842.5L2992.5 1830.5M2980 1843.5L2992.5 1835.5M2985.5 1844.5L2992.5 1840" stroke="#fff" stroke-width="1.7" stroke-linecap="round"/>
</g>
<rect x="8.0" y="374.0" width="600.0" height="49.0" fill="#394455" />
<path d="M29 394.5L21.5 400L29 405.5ZM36.5 394.5L29 400L36.5 405.5Z" fill="#6b7a8f"/>
<text x="65.0" y="407.7" font-size="23" font-weight="normal" fill="#ffffff" text-anchor="start" textLength="111.6" lengthAdjust="spacingAndGlyphs"  stroke="#ffffff" stroke-width="0.5">BROWSER</text>
<rect x="565.0" y="396.0" width="17.0" height="4.5" fill="#a7afbb" />
<rect x="80.0" y="430.0" width="242.0" height="48.0" fill="#f3f3f3" />
<rect x="116.0" y="478.0" width="301.6" height="48.0" fill="#f4f4f4" />
<rect x="116.0" y="526.0" width="237.8" height="48.0" fill="#f4f4f4" />
<rect x="116.0" y="574.0" width="207.8" height="48.0" fill="#f4f4f4" />
<rect x="116.0" y="622.0" width="215.7" height="48.0" fill="#f4f4f4" />
<rect x="116.0" y="670.0" width="239.8" height="48.0" fill="#f4f4f4" />
<rect x="80.0" y="434.0" width="240.0" height="40.0" fill="#394455" />
<rect x="129.7" y="434.0" width="139.9" height="40.0" fill="#1f2632" />
<path d="M86.0 454.9Q102.2 438.0 118.5 454.9Q102.2 471.7 86.0 454.9Z" fill="#d0d0d0"/><circle cx="102.2" cy="454.9" r="5.7" fill="#394455"/><circle cx="102.2" cy="454.9" r="3.5" fill="#a9a9a9"/>
<path d="M137.5 446L145 439.5H166V461L158.5 468H137.5Z" fill="#63c4f5"/><path d="M137.5 446L145 439.5H166L158.5 446Z" fill="#a5dcfa"/><path d="M158.5 446L166 439.5V461L158.5 468Z" fill="#3aa4e0"/>
<text x="196.0" y="461.6" font-size="24" font-weight="bold" fill="#ffffff" text-anchor="start" textLength="53.5" lengthAdjust="spacingAndGlyphs" >duck</text>
<circle cx="292" cy="453.8" r="9" fill="none" stroke="#fff" stroke-width="5.5"/>
<path d="M43 450L52 459L61 450" fill="none" stroke="#333" stroke-width="3"/>
<rect x="116.0" y="482.0" width="299.6" height="40.0" fill="#394455" />
<path d="M83.0 495.0L92.0 502.0L83.0 509.0" fill="none" stroke="#3a3a3a" stroke-width="3" stroke-linejoin="round"/>
<path d="M131.88 491.75L134.00 490.79L134.20 486.41L141.40 486.41L141.60 490.79L143.72 491.75L145.61 493.10L149.50 491.09L153.10 497.32L149.41 499.69L149.64 502.00L149.41 504.31L153.10 506.68L149.50 512.91L145.61 510.90L143.72 512.25L141.60 513.21L141.40 517.59L134.20 517.59L134.00 513.21L131.88 512.25L129.99 510.90L126.10 512.91L122.50 506.68L126.19 504.31L125.96 502.00L126.19 499.69L122.50 497.32L126.10 491.09L129.99 493.10Z" fill="#9aa0a8"/><circle cx="137.8" cy="502" r="5.8" fill="#394455"/>
<text x="182.0" y="510.6" font-size="23" font-weight="normal" fill="#ffffff" text-anchor="start" textLength="200.0" lengthAdjust="spacingAndGlyphs"  stroke="#ffffff" stroke-width="0.6">Document Settings</text>
<rect x="116.0" y="530.0" width="235.8" height="40.0" fill="#394455" />
<path d="M83.0 543.0L92.0 550.0L83.0 557.0" fill="none" stroke="#3a3a3a" stroke-width="3" stroke-linejoin="round"/>
<path d="M122.0 536.0H133.0L136.0 540.0H122.0Z" fill="#d4d4d4" opacity="0.8"/><rect x="122.0" y="541.0" width="32" height="23" fill="#d4d4d4"/>
<text x="182.0" y="558.6" font-size="23" font-weight="normal" fill="#ffffff" text-anchor="start" textLength="141.5" lengthAdjust="spacingAndGlyphs"  stroke="#ffffff" stroke-width="0.6">Named Views</text>
<rect x="116.0" y="578.0" width="205.8" height="40.0" fill="#394455" />
<path d="M83.0 591.0L92.0 598.0L83.0 605.0" fill="none" stroke="#3a3a3a" stroke-width="3" stroke-linejoin="round"/>
<g fill="none" stroke="#cfcfcf" stroke-width="2"><path d="M123.0 598.0Q138.0 583.0 153.0 598.0Q138.0 613.0 123.0 598.0Z"/><circle cx="138.0" cy="598.0" r="5"/><path d="M127.0 587.0L150.0 609.0" stroke-width="2.4"/></g>
<path d="M172.0 584.0H183.0L186.0 588.0H172.0Z" fill="#d4d4d4" opacity="0.8"/><rect x="172.0" y="589.0" width="32" height="23" fill="#d4d4d4"/>
<text x="232.0" y="606.6" font-size="23" font-weight="normal" fill="#ffffff" text-anchor="start" textLength="65.0" lengthAdjust="spacingAndGlyphs"  stroke="#ffffff" stroke-width="0.6">Origin</text>
<rect x="116.0" y="626.0" width="213.7" height="40.0" fill="#394455" />
<path d="M83.0 639.0L92.0 646.0L83.0 653.0" fill="none" stroke="#3a3a3a" stroke-width="3" stroke-linejoin="round"/>
<path d="M122.0 646.0Q138.0 628.9 154.0 646.0Q138.0 663.1 122.0 646.0Z" fill="#d0d0d0"/><circle cx="138.0" cy="646.0" r="5.8" fill="#394455"/><circle cx="138.0" cy="646.0" r="3.6" fill="#a9a9a9"/>
<path d="M172.0 632.0H183.0L186.0 636.0H172.0Z" fill="#d4d4d4" opacity="0.8"/><rect x="172.0" y="637.0" width="32" height="23" fill="#d4d4d4"/>
<text x="232.0" y="654.6" font-size="23" font-weight="normal" fill="#ffffff" text-anchor="start" textLength="68.0" lengthAdjust="spacingAndGlyphs"  stroke="#ffffff" stroke-width="0.6">Bodies</text>
<rect x="116.0" y="674.0" width="237.8" height="40.0" fill="#394455" />
<path d="M83.0 687.0L92.0 694.0L83.0 701.0" fill="none" stroke="#3a3a3a" stroke-width="3" stroke-linejoin="round"/>
<g fill="none" stroke="#cfcfcf" stroke-width="2"><path d="M123.0 694.0Q138.0 679.0 153.0 694.0Q138.0 709.0 123.0 694.0Z"/><circle cx="138.0" cy="694.0" r="5"/><path d="M127.0 683.0L150.0 705.0" stroke-width="2.4"/></g>
<path d="M172.0 680.0H183.0L186.0 684.0H172.0Z" fill="#d4d4d4" opacity="0.8"/><rect x="172.0" y="685.0" width="32" height="23" fill="#d4d4d4"/>
<text x="232.0" y="702.6" font-size="23" font-weight="normal" fill="#ffffff" text-anchor="start" textLength="91.5" lengthAdjust="spacingAndGlyphs"  stroke="#ffffff" stroke-width="0.6">Sketches</text>
<rect x="8.0" y="1806.0" width="600.0" height="50.0" fill="#394455" />
<text x="64.6" y="1839.5" font-size="23" font-weight="normal" fill="#ffffff" text-anchor="start" textLength="129.4" lengthAdjust="spacingAndGlyphs"  stroke="#ffffff" stroke-width="0.5">COMMENTS</text>
<rect x="565.0" y="1828.3" width="17.0" height="4.2" fill="#a7afbb" />
<rect x="571.4" y="1822.6" width="4.2" height="15.4" fill="#a7afbb" />
<rect x="1274.0" y="1804.0" width="478.0" height="48.0" fill="#394455" />
<ellipse cx="1296" cy="1827.5" rx="15.5" ry="7.5" fill="none" stroke="#d9d9d9" stroke-width="2.4"/>
<rect x="1294.6" y="1808.6" width="2.8" height="36.0" fill="#39b4f0" />
<path d="M1303.0 1818.0L1310.0 1822.0L1303.0 1825.0Z" fill="#d9d9d9" />
<path d="M1323.0 1824.0H1336.5L1329.8 1832.0Z" fill="#9aa3b0"/>
<path d="M1349.6 1822.0L1362.0 1810.0L1366.0 1819.0L1380.0 1815.0L1380.0 1822.0Z" fill="#bdbdbd" />
<rect x="1349.6" y="1820.0" width="30.4" height="22.4" fill="#e9e9e9" />
<rect x="1354.0" y="1825.0" width="22.0" height="12.0" fill="#48b5ee" />
<rect x="1355.5" y="1826.5" width="19.0" height="9.0" fill="#74c9f7" />
<path d="M1405 1844L1400 1829Q1400 1826 1403 1827L1407 1832V1814Q1407 1811 1410 1811Q1412 1811 1412 1814V1826V1811Q1412 1808.5 1415 1808.5Q1418 1808.5 1418 1811V1826V1813Q1418 1810.5 1421 1810.5Q1424 1810.5 1424 1813V1827L1426 1818Q1427 1815.5 1429.5 1816Q1432 1817 1431 1820L1428 1836Q1427 1841 1424 1844Z" fill="#d9d9d9"/>
<circle cx="1461" cy="1826.5" r="9" fill="#5c6570" stroke="#fff" stroke-width="2.4"/>
<path d="M1467.5 1833L1474 1841" stroke="#d49b45" stroke-width="3.2"/>
<path d="M1476 1817H1486M1481 1811V1823M1476 1826H1486" stroke="#d9d9d9" stroke-width="2.2"/>
<rect x="1505" y="1811" width="32.5" height="32" fill="none" stroke="#f0f0f0" stroke-width="2.2" stroke-dasharray="3.5 2.5"/>
<circle cx="1518.5" cy="1823.5" r="11" fill="#5c6570" stroke="#d9d9d9" stroke-width="2.2"/>
<path d="M1528 1833L1537 1842" stroke="#d49b45" stroke-width="3"/>
<path d="M1548.4 1824.0H1560.4L1554.4 1832.0Z" fill="#9aa3b0"/>
<rect x="1571.0" y="1814.0" width="33.0" height="24.0" fill="#e0e0e0" />
<rect x="1574.0" y="1817.0" width="27.0" height="18.0" fill="#b5b5b5" />
<rect x="1585.5" y="1838.0" width="4.0" height="2.5" fill="#e0e0e0" />
<rect x="1579.0" y="1840.5" width="17.0" height="1.9" fill="#e0e0e0" />
<path d="M1610.7 1824.0H1622.7L1616.7 1832.0Z" fill="#9aa3b0"/>
<path d="M1634.6 1811H1661V1836.6H1634.6ZM1634.6 1819.5H1661M1634.6 1828H1661M1643.4 1811V1836.6M1652.2 1811V1836.6" fill="none" stroke="#dcdcdc" stroke-width="2"/>
<path d="M1671.8 1824.0H1683.9L1677.8 1832.0Z" fill="#9aa3b0"/>
<rect x="1696.0" y="1812.0" width="15.0" height="13.0" fill="#c9c9c9" />
<rect x="1699.5" y="1815.5" width="8.0" height="6.0" fill="#9e9e9e" />
<rect x="1713.0" y="1812.0" width="15.0" height="13.0" fill="#c9c9c9" />
<rect x="1716.5" y="1815.5" width="8.0" height="6.0" fill="#9e9e9e" />
<rect x="1696.0" y="1827.0" width="15.0" height="13.0" fill="#c9c9c9" />
<rect x="1699.5" y="1830.5" width="8.0" height="6.0" fill="#9e9e9e" />
<rect x="1713.0" y="1827.0" width="15.0" height="13.0" fill="#c9c9c9" />
<rect x="1716.5" y="1830.5" width="8.0" height="6.0" fill="#9e9e9e" />
<path d="M1734.0 1824.0H1746.0L1740.0 1832.0Z" fill="#9aa3b0"/>
<rect x="24.0" y="1908.0" width="4.5" height="24.0" fill="#aab1bc" />
<path d="M29.0 1920.0L46.4 1908.5L46.4 1931.5Z" fill="#aab1bc" />
<path d="M72.4 1920.5L93.0 1908.5L93.0 1932.0Z" fill="#aab1bc" />
<rect x="94.5" y="1914.5" width="4.0" height="11.5" fill="#aab1bc" />
<path d="M123.7 1904.0L148.0 1919.0L123.7 1933.8Z" fill="#aab1bc" />
<rect x="172.0" y="1914.5" width="4.0" height="11.5" fill="#aab1bc" />
<path d="M177.5 1908.5L197.4 1920.5L177.5 1932.0Z" fill="#aab1bc" />
<path d="M223.5 1908.5L241.5 1920.0L223.5 1931.5Z" fill="#aab1bc" />
<rect x="241.5" y="1908.0" width="4.5" height="24.0" fill="#aab1bc" />
<rect x="308.2" y="1947.6" width="1201.8" height="4.2" fill="#5b6a7e" />
<rect x="308.0" y="1937.0" width="4.0" height="11.0" fill="#5b6a7e" />
<rect x="356.0" y="1937.0" width="4.0" height="11.0" fill="#5b6a7e" />
<rect x="336.0" y="1891.7" width="47.6" height="48.3" rx="6" fill="#8d6c42"/>
<rect x="404.0" y="1937.0" width="4.0" height="11.0" fill="#5b6a7e" />
<rect x="452.0" y="1937.0" width="4.0" height="11.0" fill="#5b6a7e" />
<rect x="432.0" y="1891.7" width="48" height="48.3" rx="6" fill="#8d6c42"/>
<rect x="500.0" y="1937.0" width="4.0" height="11.0" fill="#5b6a7e" />
<rect x="480.0" y="1891.7" width="47.6" height="48.3" rx="6" fill="#8d6c42"/>
<rect x="548.0" y="1937.0" width="4.0" height="11.0" fill="#5b6a7e" />
<rect x="596.0" y="1937.0" width="4.0" height="11.0" fill="#5b6a7e" />
<rect x="644.0" y="1937.0" width="4.0" height="11.0" fill="#5b6a7e" />
<rect x="692.0" y="1937.0" width="4.0" height="11.0" fill="#5b6a7e" />
<rect x="740.0" y="1937.0" width="4.0" height="11.0" fill="#5b6a7e" />
<rect x="788.0" y="1937.0" width="4.0" height="11.0" fill="#5b6a7e" />
<rect x="836.0" y="1937.0" width="4.0" height="11.0" fill="#5b6a7e" />
<rect x="884.0" y="1937.0" width="4.0" height="11.0" fill="#5b6a7e" />
<rect x="932.0" y="1937.0" width="4.0" height="11.0" fill="#5b6a7e" />
<rect x="980.0" y="1937.0" width="4.0" height="11.0" fill="#5b6a7e" />
<rect x="1028.0" y="1937.0" width="4.0" height="11.0" fill="#5b6a7e" />
<rect x="1076.0" y="1937.0" width="4.0" height="11.0" fill="#5b6a7e" />
<rect x="1124.0" y="1937.0" width="4.0" height="11.0" fill="#5b6a7e" />
<rect x="1172.0" y="1937.0" width="4.0" height="11.0" fill="#5b6a7e" />
<rect x="1220.0" y="1937.0" width="4.0" height="11.0" fill="#5b6a7e" />
<rect x="1268.0" y="1937.0" width="4.0" height="11.0" fill="#5b6a7e" />
<rect x="1248.0" y="1891.7" width="48" height="48.3" rx="6" fill="#8d6c42"/>
<rect x="1316.0" y="1937.0" width="4.0" height="11.0" fill="#5b6a7e" />
<rect x="1296.0" y="1891.7" width="47.6" height="48.3" rx="6" fill="#8d6c42"/>
<rect x="1364.0" y="1937.0" width="4.0" height="11.0" fill="#5b6a7e" />
<rect x="1412.0" y="1937.0" width="4.0" height="11.0" fill="#5b6a7e" />
<rect x="1460.0" y="1937.0" width="4.0" height="11.0" fill="#5b6a7e" />
<rect x="1506.0" y="1937.0" width="4.0" height="11.0" fill="#5b6a7e" />
<rect x="293.9" y="1901.5" width="28.2" height="29" rx="7" fill="#e2c9f8"/><rect x="297.0" y="1909.0" width="20" height="19" rx="4" fill="#c79af0"/><path d="M307.0 1904.0V1929.0M295.0 1918.0H320.0M318.0 1906.0V1928.0" stroke="#a77fd0" stroke-width="1.2" opacity="0.8"/>
<path d="M342.1 1905.5L345.9 1901.2L366.0 1901.2L360.6 1905.5Z" fill="#a3ddfc" /><path d="M360.6 1905.5L366.0 1901.2L366.0 1923.2L360.6 1927.8Z" fill="#3fa9e6" /><rect x="342.1" y="1905.5" width="18.5" height="22.3" fill="#6ccbfa" /><rect x="342.1" y="1929.1" width="18.5" height="4.1" fill="#e4e0da" /><path d="M360.6 1929.1L366.0 1924.7L366.0 1928.7L360.6 1933.2Z" fill="#c4c0ba" /><rect x="369.8" y="1904.2" width="2.5" height="23.0" fill="#fff" /><path d="M367.9 1906.2L371.1 1901.7L374.3 1906.2Z" fill="#fff" />
<rect x="404.0" y="1907.0" width="3.0" height="16.0" fill="#fff" /><rect x="397.5" y="1913.5" width="16.0" height="3.0" fill="#fff" /><path d="M405.5 1900.0L411.7 1907.5L399.3 1907.5Z" fill="#fff" /><path d="M405.5 1930.0L411.7 1922.5L399.3 1922.5Z" fill="#fff" /><path d="M390.5 1915.0L398.0 1908.8L398.0 1921.2Z" fill="#fff" /><path d="M420.5 1915.0L413.0 1908.8L413.0 1921.2Z" fill="#fff" />
<path d="M438.1 1905.5L441.9 1901.2L462.0 1901.2L456.6 1905.5Z" fill="#a3ddfc" /><path d="M456.6 1905.5L462.0 1901.2L462.0 1923.2L456.6 1927.8Z" fill="#3fa9e6" /><rect x="438.1" y="1905.5" width="18.5" height="22.3" fill="#6ccbfa" /><rect x="438.1" y="1929.1" width="18.5" height="4.1" fill="#e4e0da" /><path d="M456.6 1929.1L462.0 1924.7L462.0 1928.7L456.6 1933.2Z" fill="#c4c0ba" /><rect x="465.8" y="1904.2" width="2.5" height="23.0" fill="#fff" /><path d="M463.9 1906.2L467.1 1901.7L470.3 1906.2Z" fill="#fff" />
<path d="M486.1 1905.5L489.9 1901.2L510.0 1901.2L504.6 1905.5Z" fill="#a3ddfc" /><path d="M504.6 1905.5L510.0 1901.2L510.0 1923.2L504.6 1927.8Z" fill="#3fa9e6" /><rect x="486.1" y="1905.5" width="18.5" height="22.3" fill="#6ccbfa" /><rect x="486.1" y="1929.1" width="18.5" height="4.1" fill="#e4e0da" /><path d="M504.6 1929.1L510.0 1924.7L510.0 1928.7L504.6 1933.2Z" fill="#c4c0ba" /><rect x="513.8" y="1904.2" width="2.5" height="23.0" fill="#fff" /><path d="M511.9 1906.2L515.1 1901.7L518.3 1906.2Z" fill="#fff" />
<path d="M534.0 1903.0L541.0 1910.0M541.0 1903.0L534.0 1910.0" stroke="#ff2d2d" stroke-width="2.4"/><path d="M543.0 1915.0L547.5 1910.5L560.5 1910.5L556.0 1915.0Z" fill="#e8f6fe" /><path d="M556.0 1915.0L560.5 1910.5L560.5 1923.5L556.0 1928.0Z" fill="#3fa9e6" /><rect x="543.0" y="1915.0" width="13.0" height="13.0" fill="#9fdcfb" />
<rect x="584.0" y="1902.0" width="5.0" height="5.0" fill="#4fc0f5" /><rect x="606.0" y="1902.0" width="5.0" height="5.0" fill="#4fc0f5" /><rect x="584.0" y="1924.0" width="5.0" height="5.0" fill="#4fc0f5" /><rect x="590.5" y="1903.5" width="14.0" height="2.0" fill="#e8e8e8" /><rect x="585.5" y="1908.5" width="2.0" height="14.0" fill="#e8e8e8" /><rect x="607.5" y="1908.5" width="2.0" height="7.5" fill="#e8e8e8" /><rect x="590.5" y="1925.5" width="5.5" height="2.0" fill="#e8e8e8" /><g transform="translate(606,1922) rotate(45)"><rect x="-3.3" y="-9" width="6.6" height="13" fill="#f5c050"/><path d="M-3.3 -9Q0 -14 3.3 -9Z" fill="#f25b5b"/><rect x="-3.3" y="-11" width="6.6" height="3" fill="#f25b5b"/><path d="M-3.3 4L0 10L3.3 4Z" fill="#e9e0cc"/></g>
<path d="M630.1 1905.5L633.9 1901.2L654.0 1901.2L648.6 1905.5Z" fill="#a3ddfc" /><path d="M648.6 1905.5L654.0 1901.2L654.0 1923.2L648.6 1927.8Z" fill="#3fa9e6" /><rect x="630.1" y="1905.5" width="18.5" height="22.3" fill="#6ccbfa" /><rect x="630.1" y="1929.1" width="18.5" height="4.1" fill="#e4e0da" /><path d="M648.6 1929.1L654.0 1924.7L654.0 1928.7L648.6 1933.2Z" fill="#c4c0ba" /><rect x="657.8" y="1904.2" width="2.5" height="23.0" fill="#fff" /><path d="M655.9 1906.2L659.1 1901.7L662.3 1906.2Z" fill="#fff" />
<rect x="692.0" y="1907.0" width="3.0" height="16.0" fill="#fff" /><rect x="685.5" y="1913.5" width="16.0" height="3.0" fill="#fff" /><path d="M693.5 1900.0L699.7 1907.5L687.3 1907.5Z" fill="#fff" /><path d="M693.5 1930.0L699.7 1922.5L687.3 1922.5Z" fill="#fff" /><path d="M678.5 1915.0L686.0 1908.8L686.0 1921.2Z" fill="#fff" /><path d="M708.5 1915.0L701.0 1908.8L701.0 1921.2Z" fill="#fff" />
<rect x="728.0" y="1902.0" width="5.0" height="5.0" fill="#4fc0f5" /><rect x="750.0" y="1902.0" width="5.0" height="5.0" fill="#4fc0f5" /><rect x="728.0" y="1924.0" width="5.0" height="5.0" fill="#4fc0f5" /><rect x="734.5" y="1903.5" width="14.0" height="2.0" fill="#e8e8e8" /><rect x="729.5" y="1908.5" width="2.0" height="14.0" fill="#e8e8e8" /><rect x="751.5" y="1908.5" width="2.0" height="7.5" fill="#e8e8e8" /><rect x="734.5" y="1925.5" width="5.5" height="2.0" fill="#e8e8e8" /><g transform="translate(750,1922) rotate(45)"><rect x="-3.3" y="-9" width="6.6" height="13" fill="#f5c050"/><path d="M-3.3 -9Q0 -14 3.3 -9Z" fill="#f25b5b"/><rect x="-3.3" y="-11" width="6.6" height="3" fill="#f25b5b"/><path d="M-3.3 4L0 10L3.3 4Z" fill="#e9e0cc"/></g>
<path d="M774.1 1905.5L777.9 1901.2L798.0 1901.2L792.6 1905.5Z" fill="#a3ddfc" /><path d="M792.6 1905.5L798.0 1901.2L798.0 1923.2L792.6 1927.8Z" fill="#3fa9e6" /><rect x="774.1" y="1905.5" width="18.5" height="22.3" fill="#6ccbfa" /><rect x="774.1" y="1929.1" width="18.5" height="4.1" fill="#e4e0da" /><path d="M792.6 1929.1L798.0 1924.7L798.0 1928.7L792.6 1933.2Z" fill="#c4c0ba" /><rect x="801.8" y="1904.2" width="2.5" height="23.0" fill="#fff" /><path d="M799.9 1906.2L803.1 1901.7L806.3 1906.2Z" fill="#fff" />
<path d="M822.1 1905.5L825.9 1901.2L846.0 1901.2L840.6 1905.5Z" fill="#a3ddfc" /><path d="M840.6 1905.5L846.0 1901.2L846.0 1923.2L840.6 1927.8Z" fill="#3fa9e6" /><rect x="822.1" y="1905.5" width="18.5" height="22.3" fill="#6ccbfa" /><rect x="822.1" y="1929.1" width="18.5" height="4.1" fill="#e4e0da" /><path d="M840.6 1929.1L846.0 1924.7L846.0 1928.7L840.6 1933.2Z" fill="#c4c0ba" /><rect x="849.8" y="1904.2" width="2.5" height="23.0" fill="#fff" /><path d="M847.9 1906.2L851.1 1901.7L854.3 1906.2Z" fill="#fff" />
<path d="M870.1 1905.5L873.9 1901.2L894.0 1901.2L888.6 1905.5Z" fill="#a3ddfc" /><path d="M888.6 1905.5L894.0 1901.2L894.0 1923.2L888.6 1927.8Z" fill="#3fa9e6" /><rect x="870.1" y="1905.5" width="18.5" height="22.3" fill="#6ccbfa" /><rect x="870.1" y="1929.1" width="18.5" height="4.1" fill="#e4e0da" /><path d="M888.6 1929.1L894.0 1924.7L894.0 1928.7L888.6 1933.2Z" fill="#c4c0ba" /><rect x="897.8" y="1904.2" width="2.5" height="23.0" fill="#fff" /><path d="M895.9 1906.2L899.1 1901.7L902.3 1906.2Z" fill="#fff" />
<path d="M918.1 1905.5L921.9 1901.2L942.0 1901.2L936.6 1905.5Z" fill="#a3ddfc" /><path d="M936.6 1905.5L942.0 1901.2L942.0 1923.2L936.6 1927.8Z" fill="#3fa9e6" /><rect x="918.1" y="1905.5" width="18.5" height="22.3" fill="#6ccbfa" /><rect x="918.1" y="1929.1" width="18.5" height="4.1" fill="#e4e0da" /><path d="M936.6 1929.1L942.0 1924.7L942.0 1928.7L936.6 1933.2Z" fill="#c4c0ba" /><rect x="945.8" y="1904.2" width="2.5" height="23.0" fill="#fff" /><path d="M943.9 1906.2L947.1 1901.7L950.3 1906.2Z" fill="#fff" />
<rect x="965.0" y="1899.0" width="33.0" height="32.0" fill="#6ccbfa" /><rect x="965.0" y="1913.0" width="15.0" height="18.0" fill="#d8d8d8" />
<rect x="1016.0" y="1902.0" width="5.0" height="5.0" fill="#4fc0f5" /><rect x="1038.0" y="1902.0" width="5.0" height="5.0" fill="#4fc0f5" /><rect x="1016.0" y="1924.0" width="5.0" height="5.0" fill="#4fc0f5" /><rect x="1022.5" y="1903.5" width="14.0" height="2.0" fill="#e8e8e8" /><rect x="1017.5" y="1908.5" width="2.0" height="14.0" fill="#e8e8e8" /><rect x="1039.5" y="1908.5" width="2.0" height="7.5" fill="#e8e8e8" /><rect x="1022.5" y="1925.5" width="5.5" height="2.0" fill="#e8e8e8" /><g transform="translate(1038,1922) rotate(45)"><rect x="-3.3" y="-9" width="6.6" height="13" fill="#f5c050"/><path d="M-3.3 -9Q0 -14 3.3 -9Z" fill="#f25b5b"/><rect x="-3.3" y="-11" width="6.6" height="3" fill="#f25b5b"/><path d="M-3.3 4L0 10L3.3 4Z" fill="#e9e0cc"/></g>
<rect x="1064.0" y="1902.0" width="5.0" height="5.0" fill="#4fc0f5" /><rect x="1086.0" y="1902.0" width="5.0" height="5.0" fill="#4fc0f5" /><rect x="1064.0" y="1924.0" width="5.0" height="5.0" fill="#4fc0f5" /><rect x="1070.5" y="1903.5" width="14.0" height="2.0" fill="#e8e8e8" /><rect x="1065.5" y="1908.5" width="2.0" height="14.0" fill="#e8e8e8" /><rect x="1087.5" y="1908.5" width="2.0" height="7.5" fill="#e8e8e8" /><rect x="1070.5" y="1925.5" width="5.5" height="2.0" fill="#e8e8e8" /><g transform="translate(1086,1922) rotate(45)"><rect x="-3.3" y="-9" width="6.6" height="13" fill="#f5c050"/><path d="M-3.3 -9Q0 -14 3.3 -9Z" fill="#f25b5b"/><rect x="-3.3" y="-11" width="6.6" height="3" fill="#f25b5b"/><path d="M-3.3 4L0 10L3.3 4Z" fill="#e9e0cc"/></g>
<rect x="1112.0" y="1902.0" width="5.0" height="5.0" fill="#4fc0f5" /><rect x="1134.0" y="1902.0" width="5.0" height="5.0" fill="#4fc0f5" /><rect x="1112.0" y="1924.0" width="5.0" height="5.0" fill="#4fc0f5" /><rect x="1118.5" y="1903.5" width="14.0" height="2.0" fill="#e8e8e8" /><rect x="1113.5" y="1908.5" width="2.0" height="14.0" fill="#e8e8e8" /><rect x="1135.5" y="1908.5" width="2.0" height="7.5" fill="#e8e8e8" /><rect x="1118.5" y="1925.5" width="5.5" height="2.0" fill="#e8e8e8" /><g transform="translate(1134,1922) rotate(45)"><rect x="-3.3" y="-9" width="6.6" height="13" fill="#f5c050"/><path d="M-3.3 -9Q0 -14 3.3 -9Z" fill="#f25b5b"/><rect x="-3.3" y="-11" width="6.6" height="3" fill="#f25b5b"/><path d="M-3.3 4L0 10L3.3 4Z" fill="#e9e0cc"/></g>
<rect x="1157.9" y="1901.5" width="28.2" height="29" rx="7" fill="#e2c9f8"/><rect x="1161.0" y="1909.0" width="20" height="19" rx="4" fill="#c79af0"/><path d="M1171.0 1904.0V1929.0M1159.0 1918.0H1184.0M1182.0 1906.0V1928.0" stroke="#a77fd0" stroke-width="1.2" opacity="0.8"/>
<rect x="1208.0" y="1902.0" width="5.0" height="5.0" fill="#4fc0f5" /><rect x="1230.0" y="1902.0" width="5.0" height="5.0" fill="#4fc0f5" /><rect x="1208.0" y="1924.0" width="5.0" height="5.0" fill="#4fc0f5" /><rect x="1214.5" y="1903.5" width="14.0" height="2.0" fill="#e8e8e8" /><rect x="1209.5" y="1908.5" width="2.0" height="14.0" fill="#e8e8e8" /><rect x="1231.5" y="1908.5" width="2.0" height="7.5" fill="#e8e8e8" /><rect x="1214.5" y="1925.5" width="5.5" height="2.0" fill="#e8e8e8" /><g transform="translate(1230,1922) rotate(45)"><rect x="-3.3" y="-9" width="6.6" height="13" fill="#f5c050"/><path d="M-3.3 -9Q0 -14 3.3 -9Z" fill="#f25b5b"/><rect x="-3.3" y="-11" width="6.6" height="3" fill="#f25b5b"/><path d="M-3.3 4L0 10L3.3 4Z" fill="#e9e0cc"/></g>
<rect x="1256.0" y="1902.0" width="5.0" height="5.0" fill="#4fc0f5" /><rect x="1278.0" y="1902.0" width="5.0" height="5.0" fill="#4fc0f5" /><rect x="1256.0" y="1924.0" width="5.0" height="5.0" fill="#4fc0f5" /><rect x="1262.5" y="1903.5" width="14.0" height="2.0" fill="#e8e8e8" /><rect x="1257.5" y="1908.5" width="2.0" height="14.0" fill="#e8e8e8" /><rect x="1279.5" y="1908.5" width="2.0" height="7.5" fill="#e8e8e8" /><rect x="1262.5" y="1925.5" width="5.5" height="2.0" fill="#e8e8e8" /><g transform="translate(1278,1922) rotate(45)"><rect x="-3.3" y="-9" width="6.6" height="13" fill="#f5c050"/><path d="M-3.3 -9Q0 -14 3.3 -9Z" fill="#f25b5b"/><rect x="-3.3" y="-11" width="6.6" height="3" fill="#f25b5b"/><path d="M-3.3 4L0 10L3.3 4Z" fill="#e9e0cc"/></g>
<rect x="1304.0" y="1902.0" width="5.0" height="5.0" fill="#4fc0f5" /><rect x="1326.0" y="1902.0" width="5.0" height="5.0" fill="#4fc0f5" /><rect x="1304.0" y="1924.0" width="5.0" height="5.0" fill="#4fc0f5" /><rect x="1310.5" y="1903.5" width="14.0" height="2.0" fill="#e8e8e8" /><rect x="1305.5" y="1908.5" width="2.0" height="14.0" fill="#e8e8e8" /><rect x="1327.5" y="1908.5" width="2.0" height="7.5" fill="#e8e8e8" /><rect x="1310.5" y="1925.5" width="5.5" height="2.0" fill="#e8e8e8" /><g transform="translate(1326,1922) rotate(45)"><rect x="-3.3" y="-9" width="6.6" height="13" fill="#f5c050"/><path d="M-3.3 -9Q0 -14 3.3 -9Z" fill="#f25b5b"/><rect x="-3.3" y="-11" width="6.6" height="3" fill="#f25b5b"/><path d="M-3.3 4L0 10L3.3 4Z" fill="#e9e0cc"/></g>
<rect x="1349.9" y="1901.5" width="28.2" height="29" rx="7" fill="#e2c9f8"/><rect x="1353.0" y="1909.0" width="20" height="19" rx="4" fill="#c79af0"/><path d="M1363.0 1904.0V1929.0M1351.0 1918.0H1376.0M1374.0 1906.0V1928.0" stroke="#a77fd0" stroke-width="1.2" opacity="0.8"/>
<rect x="1412.0" y="1907.0" width="3.0" height="16.0" fill="#fff" /><rect x="1405.5" y="1913.5" width="16.0" height="3.0" fill="#fff" /><path d="M1413.5 1900.0L1419.7 1907.5L1407.3 1907.5Z" fill="#fff" /><path d="M1413.5 1930.0L1419.7 1922.5L1407.3 1922.5Z" fill="#fff" /><path d="M1398.5 1915.0L1406.0 1908.8L1406.0 1921.2Z" fill="#fff" /><path d="M1428.5 1915.0L1421.0 1908.8L1421.0 1921.2Z" fill="#fff" />
<rect x="1460.0" y="1907.0" width="3.0" height="16.0" fill="#fff" /><rect x="1453.5" y="1913.5" width="16.0" height="3.0" fill="#fff" /><path d="M1461.5 1900.0L1467.7 1907.5L1455.3 1907.5Z" fill="#fff" /><path d="M1461.5 1930.0L1467.7 1922.5L1455.3 1922.5Z" fill="#fff" /><path d="M1446.5 1915.0L1454.0 1908.8L1454.0 1921.2Z" fill="#fff" /><path d="M1476.5 1915.0L1469.0 1908.8L1469.0 1921.2Z" fill="#fff" />
<rect x="1508.0" y="1907.0" width="3.0" height="16.0" fill="#fff" /><rect x="1501.5" y="1913.5" width="16.0" height="3.0" fill="#fff" /><path d="M1509.5 1900.0L1515.7 1907.5L1503.3 1907.5Z" fill="#fff" /><path d="M1509.5 1930.0L1515.7 1922.5L1503.3 1922.5Z" fill="#fff" /><path d="M1494.5 1915.0L1502.0 1908.8L1502.0 1921.2Z" fill="#fff" /><path d="M1524.5 1915.0L1517.0 1908.8L1517.0 1921.2Z" fill="#fff" />
<path d="M1520 1888H1544V1895L1534 1905V1952H1530V1905L1520 1895Z" fill="#c7cbd2"/>
<path d="M2977.89 1909.43L2980.08 1908.44L2980.29 1903.92L2987.71 1903.92L2987.92 1908.44L2990.11 1909.43L2992.05 1910.82L2996.07 1908.75L2999.78 1915.18L2995.97 1917.61L2996.21 1920.00L2995.97 1922.39L2999.78 1924.82L2996.07 1931.25L2992.05 1929.18L2990.11 1930.57L2987.92 1931.56L2987.71 1936.08L2980.29 1936.08L2980.08 1931.56L2977.89 1930.57L2975.95 1929.18L2971.93 1931.25L2968.22 1924.82L2972.03 1922.39L2971.79 1920.00L2972.03 1917.61L2968.22 1915.18L2971.93 1908.75L2975.95 1910.82Z" fill="#b9bec7"/><circle cx="2984" cy="1920" r="5.9" fill="#394455"/></svg></body></html>
